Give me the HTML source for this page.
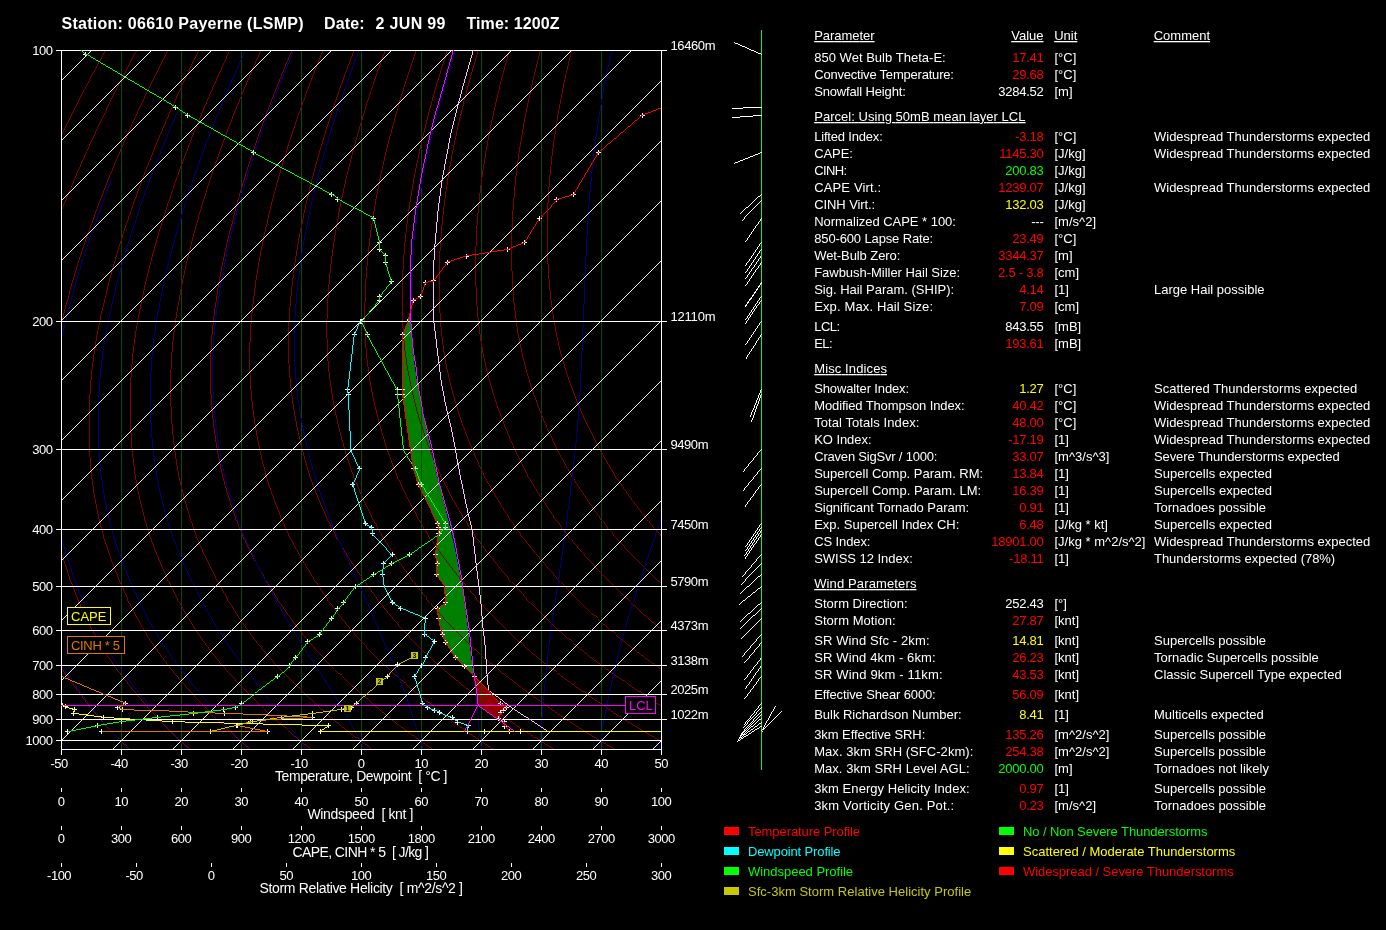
<!DOCTYPE html>
<html><head><meta charset="utf-8"><title>Sounding</title>
<style>html,body{margin:0;padding:0;background:#000;}body{width:1386px;height:930px;position:relative;overflow:hidden;font-family:"Liberation Sans",Arial,sans-serif;}text{white-space:pre}</style>
</head><body>
<svg width="1386" height="930" viewBox="0 0 1386 930" style="position:absolute;left:0;top:0;will-change:transform" font-family="Liberation Sans, Arial, sans-serif" font-size="13" fill="#fff">
<defs><clipPath id="cp"><rect x="61" y="50" width="601" height="700"/></clipPath></defs>
<g shape-rendering="crispEdges" stroke-width="0.99" clip-path="url(#cp)">
<polygon points="410.6,311.0 407.9,321.6 402.9,334.5 402.2,389.7 402.6,394.7 410.4,449.5 413.7,468.5 418.3,484.4 437.5,523.8 438.2,527.3 438.2,533.5 435.3,554.2 437.1,563.3 436.5,574.4 444.4,586.0 445.7,602.6 437.5,608.1 438.2,618.2 442.3,634.8 445.4,642.0 455.3,657.9 464.4,666.1 474.5,676.2 474.4,676.2 473.1,665.7 470.2,639.4 469.3,630.4 464.9,601.6 460.6,572.7 452.4,529.4 448.3,515.4 439.7,484.4 432.5,449.5 423.0,414.0 420.9,400.0 418.7,389.7 415.9,366.6 412.5,345.0 410.8,321.6 410.7,311.0" fill="#008000" stroke="none"/>
<polygon points="474.5,676.2 500.5,703.6 506.3,707.3 503.5,710.4 500.5,713.0 499.0,718.1 504.1,721.5 504.5,723.8 504.0,723.8 478.1,705.4 477.0,694.7 475.2,682.7 474.4,676.2" fill="#900000" stroke="none"/>
<line x1="121.5" y1="50.0" x2="121.5" y2="750.0" stroke="#005000" />
<line x1="181.5" y1="50.0" x2="181.5" y2="750.0" stroke="#005000" />
<line x1="241.5" y1="50.0" x2="241.5" y2="750.0" stroke="#005000" />
<line x1="301.5" y1="50.0" x2="301.5" y2="750.0" stroke="#005000" />
<line x1="361.5" y1="50.0" x2="361.5" y2="750.0" stroke="#005000" />
<line x1="421.5" y1="50.0" x2="421.5" y2="750.0" stroke="#005000" />
<line x1="481.5" y1="50.0" x2="481.5" y2="750.0" stroke="#005000" />
<line x1="541.5" y1="50.0" x2="541.5" y2="750.0" stroke="#005000" />
<line x1="601.5" y1="50.0" x2="601.5" y2="750.0" stroke="#005000" />
<polyline points="69.6,750.7 66.4,747.3 63.2,744.0 60.1,740.6 57.1,737.2 54.1,733.8 51.1,730.3 48.2,726.9 45.4,723.4 42.6,719.9 39.9,716.4 37.2,712.8 34.6,709.2 32.0,705.6 29.5,702.0 27.0,698.4 24.5,694.8 22.0,691.2 19.6,687.6 17.2,684.0 14.9,680.3 12.5,676.7 10.3,673.1 8.1,669.4 5.9,665.7 3.8,661.9 1.8,658.2 -0.2,654.4 -2.1,650.6 -4.0,646.7 -5.8,642.9 -7.6,639.0 -9.3,635.1 -11.0,631.1 -12.6,627.1 -14.1,623.1 -15.6,619.1 -17.0,615.0 -18.4,610.9 -19.7,606.8 -21.0,602.6 -22.2,598.5 -23.4,594.3 -24.6,590.1 -25.7,585.9 -26.8,581.7 -27.8,577.5 -28.9,573.3 -29.9,569.1 -30.8,564.8 -31.7,560.6 -32.6,556.3 -33.4,552.0 -34.2,547.7 -34.9,543.3 -35.5,538.9 -36.1,534.5 -36.7,530.0 -37.1,525.5 -37.6,521.0 -38.0,516.5 -38.3,511.9 -38.6,507.3 -38.8,502.7 -39.0,498.1 -39.2,493.4 -39.3,488.8 -39.3,484.0 -39.3,479.3 -39.2,474.5 -39.1,469.7 -38.9,464.8 -38.7,460.0 -38.4,455.0 -38.0,450.1 -37.6,445.1 -37.2,440.1 -36.7,435.1 -36.1,430.0 -35.6,425.0 -34.9,419.9 -34.3,414.7 -33.5,409.6 -32.8,404.4 -32.0,399.2 -31.1,394.0 -30.2,388.7 -29.2,383.4 -28.1,378.1 -27.0,372.7 -25.8,367.3 -24.6,361.8 -23.3,356.3 -22.0,350.7 -20.5,345.1 -19.0,339.4 -17.4,333.7 -15.8,328.0 -14.1,322.1 -12.3,316.3 -10.4,310.4 -8.5,304.4 -6.6,298.5 -4.6,292.5 -2.5,286.4 -0.4,280.3 1.8,274.2 4.0,268.0 6.3,261.9 8.7,255.6 11.1,249.4 13.5,243.1 16.1,236.7 18.6,230.3 21.3,223.9 23.9,217.5 26.7,211.0 29.5,204.4 32.3,197.9 35.2,191.3 38.2,184.6 41.2,177.9 44.3,171.2 47.4,164.4 50.6,157.6 53.8,150.8 57.1,143.9 60.5,137.0 63.9,130.0 67.4,123.0 70.9,116.0 74.5,108.9 78.2,101.8 81.9,94.6 85.6,87.4 89.5,80.2 93.3,72.9 97.3,65.6 101.3,58.2 105.3,50.8" stroke="#800000" fill="none" />
<polyline points="130.5,750.7 127.0,747.3 123.5,744.0 120.1,740.6 116.8,737.2 113.5,733.8 110.2,730.3 107.1,726.9 103.9,723.4 100.9,719.9 97.8,716.4 94.9,712.8 92.0,709.2 89.1,705.6 86.3,702.0 83.6,698.4 80.8,694.8 78.1,691.2 75.4,687.6 72.7,684.0 70.1,680.3 67.5,676.7 65.0,673.1 62.5,669.4 60.1,665.7 57.8,661.9 55.5,658.2 53.2,654.4 51.0,650.6 48.9,646.7 46.8,642.9 44.8,639.0 42.8,635.1 40.9,631.1 39.0,627.1 37.3,623.1 35.5,619.1 33.9,615.0 32.2,610.9 30.7,606.8 29.2,602.6 27.7,598.5 26.2,594.3 24.8,590.1 23.5,585.9 22.2,581.7 20.9,577.5 19.6,573.3 18.4,569.1 17.2,564.8 16.1,560.6 15.0,556.3 13.9,552.0 12.9,547.7 12.0,543.3 11.1,538.9 10.3,534.5 9.5,530.0 8.8,525.5 8.2,521.0 7.6,516.5 7.0,511.9 6.5,507.3 6.0,502.7 5.6,498.1 5.3,493.4 5.0,488.8 4.7,484.0 4.5,479.3 4.4,474.5 4.3,469.7 4.3,464.8 4.3,460.0 4.4,455.0 4.5,450.1 4.7,445.1 5.0,440.1 5.3,435.1 5.6,430.0 6.0,425.0 6.4,419.9 6.9,414.7 7.4,409.6 8.0,404.4 8.6,399.2 9.3,394.0 10.0,388.7 10.8,383.4 11.6,378.1 12.6,372.7 13.5,367.3 14.6,361.8 15.7,356.3 16.9,350.7 18.1,345.1 19.4,339.4 20.8,333.7 22.3,328.0 23.8,322.1 25.4,316.3 27.1,310.4 28.8,304.4 30.6,298.5 32.4,292.5 34.3,286.4 36.3,280.3 38.3,274.2 40.3,268.0 42.4,261.9 44.6,255.6 46.8,249.4 49.1,243.1 51.5,236.7 53.9,230.3 56.3,223.9 58.8,217.5 61.4,211.0 64.0,204.4 66.7,197.9 69.5,191.3 72.2,184.6 75.1,177.9 78.0,171.2 81.0,164.4 84.0,157.6 87.1,150.8 90.2,143.9 93.4,137.0 96.7,130.0 100.0,123.0 103.4,116.0 106.8,108.9 110.3,101.8 113.9,94.6 117.5,87.4 121.1,80.2 124.9,72.9 128.6,65.6 132.5,58.2 136.4,50.8" stroke="#800000" fill="none" />
<polyline points="191.3,750.7 187.5,747.3 183.8,744.0 180.1,740.6 176.4,737.2 172.9,733.8 169.3,730.3 165.9,726.9 162.5,723.4 159.1,719.9 155.8,716.4 152.6,712.8 149.4,709.2 146.3,705.6 143.2,702.0 140.1,698.4 137.1,694.8 134.1,691.2 131.2,687.6 128.2,684.0 125.3,680.3 122.5,676.7 119.7,673.1 116.9,669.4 114.3,665.7 111.7,661.9 109.1,658.2 106.6,654.4 104.2,650.6 101.8,646.7 99.4,642.9 97.1,639.0 94.9,635.1 92.8,631.1 90.7,627.1 88.6,623.1 86.7,619.1 84.7,615.0 82.9,610.9 81.1,606.8 79.3,602.6 77.6,598.5 75.9,594.3 74.3,590.1 72.7,585.9 71.1,581.7 69.6,577.5 68.1,573.3 66.6,569.1 65.2,564.8 63.8,560.6 62.5,556.3 61.2,552.0 60.0,547.7 58.9,543.3 57.8,538.9 56.7,534.5 55.7,530.0 54.8,525.5 53.9,521.0 53.1,516.5 52.3,511.9 51.6,507.3 50.9,502.7 50.3,498.1 49.7,493.4 49.2,488.8 48.7,484.0 48.3,479.3 48.0,474.5 47.7,469.7 47.4,464.8 47.3,460.0 47.1,455.0 47.1,450.1 47.1,445.1 47.1,440.1 47.2,435.1 47.3,430.0 47.5,425.0 47.7,419.9 48.0,414.7 48.3,409.6 48.7,404.4 49.1,399.2 49.6,394.0 50.1,388.7 50.7,383.4 51.4,378.1 52.1,372.7 52.9,367.3 53.8,361.8 54.7,356.3 55.7,350.7 56.7,345.1 57.9,339.4 59.1,333.7 60.4,328.0 61.7,322.1 63.1,316.3 64.6,310.4 66.2,304.4 67.8,298.5 69.4,292.5 71.1,286.4 72.9,280.3 74.7,274.2 76.6,268.0 78.5,261.9 80.5,255.6 82.6,249.4 84.7,243.1 86.9,236.7 89.1,230.3 91.4,223.9 93.7,217.5 96.1,211.0 98.6,204.4 101.1,197.9 103.7,191.3 106.3,184.6 109.0,177.9 111.8,171.2 114.6,164.4 117.4,157.6 120.4,150.8 123.3,143.9 126.4,137.0 129.5,130.0 132.6,123.0 135.9,116.0 139.1,108.9 142.5,101.8 145.9,94.6 149.3,87.4 152.8,80.2 156.4,72.9 160.0,65.6 163.7,58.2 167.5,50.8" stroke="#800000" fill="none" />
<polyline points="252.1,750.7 248.1,747.3 244.0,744.0 240.0,740.6 236.1,737.2 232.3,733.8 228.5,730.3 224.7,726.9 221.0,723.4 217.4,719.9 213.8,716.4 210.3,712.8 206.8,709.2 203.4,705.6 200.0,702.0 196.7,698.4 193.4,694.8 190.2,691.2 186.9,687.6 183.7,684.0 180.6,680.3 177.4,676.7 174.4,673.1 171.4,669.4 168.5,665.7 165.6,661.9 162.8,658.2 160.0,654.4 157.3,650.6 154.7,646.7 152.1,642.9 149.5,639.0 147.1,635.1 144.6,631.1 142.3,627.1 140.0,623.1 137.8,619.1 135.6,615.0 133.5,610.9 131.5,606.8 129.4,602.6 127.5,598.5 125.6,594.3 123.7,590.1 121.9,585.9 120.1,581.7 118.3,577.5 116.6,573.3 114.9,569.1 113.2,564.8 111.6,560.6 110.1,556.3 108.6,552.0 107.1,547.7 105.7,543.3 104.4,538.9 103.1,534.5 101.9,530.0 100.8,525.5 99.7,521.0 98.6,516.5 97.6,511.9 96.7,507.3 95.8,502.7 94.9,498.1 94.1,493.4 93.4,488.8 92.7,484.0 92.1,479.3 91.5,474.5 91.0,469.7 90.6,464.8 90.2,460.0 89.9,455.0 89.6,450.1 89.4,445.1 89.3,440.1 89.1,435.1 89.1,430.0 89.0,425.0 89.1,419.9 89.1,414.7 89.3,409.6 89.4,404.4 89.7,399.2 90.0,394.0 90.3,388.7 90.7,383.4 91.2,378.1 91.7,372.7 92.3,367.3 93.0,361.8 93.7,356.3 94.5,350.7 95.4,345.1 96.3,339.4 97.3,333.7 98.4,328.0 99.6,322.1 100.8,316.3 102.1,310.4 103.5,304.4 104.9,298.5 106.4,292.5 107.9,286.4 109.5,280.3 111.2,274.2 112.9,268.0 114.6,261.9 116.5,255.6 118.3,249.4 120.3,243.1 122.3,236.7 124.3,230.3 126.5,223.9 128.6,217.5 130.9,211.0 133.2,204.4 135.5,197.9 137.9,191.3 140.4,184.6 142.9,177.9 145.5,171.2 148.1,164.4 150.8,157.6 153.6,150.8 156.4,143.9 159.3,137.0 162.3,130.0 165.3,123.0 168.3,116.0 171.4,108.9 174.6,101.8 177.8,94.6 181.1,87.4 184.5,80.2 187.9,72.9 191.4,65.6 194.9,58.2 198.5,50.8" stroke="#800000" fill="none" />
<polyline points="313.0,750.7 308.6,747.3 304.3,744.0 300.0,740.6 295.8,737.2 291.6,733.8 287.6,730.3 283.5,726.9 279.5,723.4 275.6,719.9 271.8,716.4 268.0,712.8 264.2,709.2 260.5,705.6 256.9,702.0 253.3,698.4 249.8,694.8 246.2,691.2 242.7,687.6 239.2,684.0 235.8,680.3 232.4,676.7 229.1,673.1 225.8,669.4 222.6,665.7 219.5,661.9 216.4,658.2 213.4,654.4 210.4,650.6 207.5,646.7 204.7,642.9 201.9,639.0 199.2,635.1 196.5,631.1 193.9,627.1 191.4,623.1 188.9,619.1 186.5,615.0 184.1,610.9 181.8,606.8 179.6,602.6 177.4,598.5 175.2,594.3 173.1,590.1 171.1,585.9 169.0,581.7 167.0,577.5 165.0,573.3 163.1,569.1 161.2,564.8 159.4,560.6 157.6,556.3 155.9,552.0 154.2,547.7 152.6,543.3 151.0,538.9 149.5,534.5 148.1,530.0 146.7,525.5 145.4,521.0 144.2,516.5 142.9,511.9 141.8,507.3 140.7,502.7 139.6,498.1 138.6,493.4 137.6,488.8 136.7,484.0 135.9,479.3 135.1,474.5 134.4,469.7 133.8,464.8 133.2,460.0 132.6,455.0 132.2,450.1 131.8,445.1 131.4,440.1 131.1,435.1 130.8,430.0 130.6,425.0 130.4,419.9 130.3,414.7 130.2,409.6 130.2,404.4 130.2,399.2 130.3,394.0 130.4,388.7 130.7,383.4 130.9,378.1 131.3,372.7 131.7,367.3 132.2,361.8 132.7,356.3 133.3,350.7 134.0,345.1 134.8,339.4 135.6,333.7 136.5,328.0 137.5,322.1 138.6,316.3 139.7,310.4 140.8,304.4 142.1,298.5 143.4,292.5 144.7,286.4 146.1,280.3 147.6,274.2 149.2,268.0 150.7,261.9 152.4,255.6 154.1,249.4 155.9,243.1 157.7,236.7 159.6,230.3 161.5,223.9 163.5,217.5 165.6,211.0 167.7,204.4 169.9,197.9 172.1,191.3 174.4,184.6 176.8,177.9 179.2,171.2 181.7,164.4 184.3,157.6 186.9,150.8 189.5,143.9 192.2,137.0 195.0,130.0 197.9,123.0 200.8,116.0 203.7,108.9 206.8,101.8 209.8,94.6 213.0,87.4 216.2,80.2 219.5,72.9 222.8,65.6 226.2,58.2 229.6,50.8" stroke="#800000" fill="none" />
<polyline points="373.8,750.7 369.1,747.3 364.5,744.0 360.0,740.6 355.5,737.2 351.0,733.8 346.7,730.3 342.3,726.9 338.1,723.4 333.9,719.9 329.7,716.4 325.7,712.8 321.6,709.2 317.7,705.6 313.8,702.0 309.9,698.4 306.1,694.8 302.3,691.2 298.5,687.6 294.7,684.0 291.0,680.3 287.4,676.7 283.8,673.1 280.3,669.4 276.8,665.7 273.4,661.9 270.1,658.2 266.8,654.4 263.6,650.6 260.4,646.7 257.3,642.9 254.3,639.0 251.3,635.1 248.4,631.1 245.5,627.1 242.8,623.1 240.0,619.1 237.4,615.0 234.8,610.9 232.2,606.8 229.7,602.6 227.3,598.5 224.9,594.3 222.6,590.1 220.2,585.9 218.0,581.7 215.7,577.5 213.5,573.3 211.4,569.1 209.2,564.8 207.2,560.6 205.2,556.3 203.2,552.0 201.3,547.7 199.5,543.3 197.7,538.9 196.0,534.5 194.3,530.0 192.7,525.5 191.2,521.0 189.7,516.5 188.2,511.9 186.9,507.3 185.5,502.7 184.3,498.1 183.0,493.4 181.9,488.8 180.8,484.0 179.7,479.3 178.7,474.5 177.8,469.7 176.9,464.8 176.1,460.0 175.4,455.0 174.7,450.1 174.1,445.1 173.5,440.1 173.0,435.1 172.5,430.0 172.1,425.0 171.7,419.9 171.4,414.7 171.1,409.6 170.9,404.4 170.7,399.2 170.6,394.0 170.6,388.7 170.6,383.4 170.7,378.1 170.8,372.7 171.1,367.3 171.3,361.8 171.7,356.3 172.1,350.7 172.6,345.1 173.2,339.4 173.8,333.7 174.6,328.0 175.4,322.1 176.3,316.3 177.2,310.4 178.2,304.4 179.2,298.5 180.4,292.5 181.5,286.4 182.8,280.3 184.1,274.2 185.4,268.0 186.8,261.9 188.3,255.6 189.9,249.4 191.4,243.1 193.1,236.7 194.8,230.3 196.6,223.9 198.4,217.5 200.3,211.0 202.3,204.4 204.3,197.9 206.4,191.3 208.5,184.6 210.7,177.9 213.0,171.2 215.3,164.4 217.7,157.6 220.1,150.8 222.6,143.9 225.2,137.0 227.8,130.0 230.5,123.0 233.2,116.0 236.0,108.9 238.9,101.8 241.8,94.6 244.8,87.4 247.9,80.2 251.0,72.9 254.2,65.6 257.4,58.2 260.7,50.8" stroke="#800000" fill="none" />
<polyline points="434.7,750.7 429.7,747.3 424.8,744.0 419.9,740.6 415.2,737.2 410.4,733.8 405.8,730.3 401.2,726.9 396.6,723.4 392.1,719.9 387.7,716.4 383.3,712.8 379.1,709.2 374.8,705.6 370.6,702.0 366.5,698.4 362.4,694.8 358.3,691.2 354.3,687.6 350.2,684.0 346.3,680.3 342.4,676.7 338.5,673.1 334.7,669.4 331.0,665.7 327.3,661.9 323.7,658.2 320.2,654.4 316.7,650.6 313.3,646.7 309.9,642.9 306.7,639.0 303.4,635.1 300.3,631.1 297.2,627.1 294.1,623.1 291.2,619.1 288.3,615.0 285.4,610.9 282.6,606.8 279.9,602.6 277.2,598.5 274.6,594.3 272.0,590.1 269.4,585.9 266.9,581.7 264.4,577.5 262.0,573.3 259.6,569.1 257.3,564.8 255.0,560.6 252.7,556.3 250.5,552.0 248.4,547.7 246.3,543.3 244.3,538.9 242.4,534.5 240.5,530.0 238.7,525.5 236.9,521.0 235.2,516.5 233.6,511.9 231.9,507.3 230.4,502.7 228.9,498.1 227.5,493.4 226.1,488.8 224.8,484.0 223.5,479.3 222.3,474.5 221.2,469.7 220.1,464.8 219.1,460.0 218.2,455.0 217.3,450.1 216.5,445.1 215.7,440.1 215.0,435.1 214.3,430.0 213.6,425.0 213.1,419.9 212.5,414.7 212.1,409.6 211.6,404.4 211.3,399.2 211.0,394.0 210.8,388.7 210.6,383.4 210.5,378.1 210.4,372.7 210.4,367.3 210.5,361.8 210.7,356.3 210.9,350.7 211.3,345.1 211.6,339.4 212.1,333.7 212.6,328.0 213.3,322.1 214.0,316.3 214.7,310.4 215.5,304.4 216.4,298.5 217.3,292.5 218.3,286.4 219.4,280.3 220.5,274.2 221.7,268.0 222.9,261.9 224.2,255.6 225.6,249.4 227.0,243.1 228.5,236.7 230.1,230.3 231.7,223.9 233.3,217.5 235.1,211.0 236.8,204.4 238.7,197.9 240.6,191.3 242.6,184.6 244.6,177.9 246.7,171.2 248.9,164.4 251.1,157.6 253.4,150.8 255.7,143.9 258.1,137.0 260.6,130.0 263.1,123.0 265.7,116.0 268.3,108.9 271.1,101.8 273.8,94.6 276.7,87.4 279.6,80.2 282.5,72.9 285.5,65.6 288.6,58.2 291.8,50.8" stroke="#800000" fill="none" />
<polyline points="495.5,750.7 490.2,747.3 485.0,744.0 479.9,740.6 474.8,737.2 469.8,733.8 464.9,730.3 460.0,726.9 455.1,723.4 450.4,719.9 445.7,716.4 441.0,712.8 436.5,709.2 432.0,705.6 427.5,702.0 423.1,698.4 418.7,694.8 414.3,691.2 410.0,687.6 405.7,684.0 401.5,680.3 397.3,676.7 393.2,673.1 389.2,669.4 385.2,665.7 381.3,661.9 377.4,658.2 373.6,654.4 369.9,650.6 366.2,646.7 362.6,642.9 359.0,639.0 355.5,635.1 352.1,631.1 348.8,627.1 345.5,623.1 342.3,619.1 339.1,615.0 336.0,610.9 333.0,606.8 330.0,602.6 327.1,598.5 324.2,594.3 321.4,590.1 318.6,585.9 315.9,581.7 313.1,577.5 310.5,573.3 307.9,569.1 305.3,564.8 302.7,560.6 300.3,556.3 297.9,552.0 295.5,547.7 293.2,543.3 291.0,538.9 288.8,534.5 286.7,530.0 284.7,525.5 282.7,521.0 280.7,516.5 278.9,511.9 277.0,507.3 275.3,502.7 273.6,498.1 271.9,493.4 270.3,488.8 268.8,484.0 267.3,479.3 265.9,474.5 264.6,469.7 263.3,464.8 262.1,460.0 260.9,455.0 259.8,450.1 258.8,445.1 257.8,440.1 256.9,435.1 256.0,430.0 255.2,425.0 254.4,419.9 253.7,414.7 253.0,409.6 252.4,404.4 251.8,399.2 251.3,394.0 250.9,388.7 250.5,383.4 250.2,378.1 250.0,372.7 249.8,367.3 249.7,361.8 249.7,356.3 249.8,350.7 249.9,345.1 250.1,339.4 250.4,333.7 250.7,328.0 251.2,322.1 251.7,316.3 252.2,310.4 252.9,304.4 253.6,298.5 254.3,292.5 255.2,286.4 256.0,280.3 257.0,274.2 258.0,268.0 259.0,261.9 260.2,255.6 261.4,249.4 262.6,243.1 263.9,236.7 265.3,230.3 266.7,223.9 268.2,217.5 269.8,211.0 271.4,204.4 273.1,197.9 274.8,191.3 276.6,184.6 278.5,177.9 280.5,171.2 282.4,164.4 284.5,157.6 286.6,150.8 288.8,143.9 291.0,137.0 293.3,130.0 295.7,123.0 298.1,116.0 300.6,108.9 303.2,101.8 305.8,94.6 308.5,87.4 311.2,80.2 314.0,72.9 316.9,65.6 319.9,58.2 322.8,50.8" stroke="#800000" fill="none" />
<polyline points="556.3,750.7 550.8,747.3 545.3,744.0 539.9,740.6 534.5,737.2 529.2,733.8 524.0,730.3 518.8,726.9 513.7,723.4 508.6,719.9 503.6,716.4 498.7,712.8 493.9,709.2 489.1,705.6 484.4,702.0 479.7,698.4 475.0,694.8 470.4,691.2 465.8,687.6 461.2,684.0 456.7,680.3 452.3,676.7 447.9,673.1 443.6,669.4 439.4,665.7 435.2,661.9 431.1,658.2 427.0,654.4 423.0,650.6 419.1,646.7 415.2,642.9 411.4,639.0 407.7,635.1 404.0,631.1 400.4,627.1 396.9,623.1 393.4,619.1 390.0,615.0 386.7,610.9 383.4,606.8 380.2,602.6 377.0,598.5 373.9,594.3 370.8,590.1 367.8,585.9 364.8,581.7 361.9,577.5 359.0,573.3 356.1,569.1 353.3,564.8 350.5,560.6 347.8,556.3 345.2,552.0 342.6,547.7 340.1,543.3 337.6,538.9 335.2,534.5 332.9,530.0 330.6,525.5 328.4,521.0 326.3,516.5 324.2,511.9 322.1,507.3 320.1,502.7 318.2,498.1 316.3,493.4 314.5,488.8 312.8,484.0 311.1,479.3 309.5,474.5 307.9,469.7 306.4,464.8 305.0,460.0 303.7,455.0 302.4,450.1 301.1,445.1 300.0,440.1 298.8,435.1 297.7,430.0 296.7,425.0 295.7,419.9 294.8,414.7 293.9,409.6 293.1,404.4 292.4,399.2 291.7,394.0 291.1,388.7 290.5,383.4 290.0,378.1 289.6,372.7 289.2,367.3 288.9,361.8 288.7,356.3 288.6,350.7 288.5,345.1 288.5,339.4 288.6,333.7 288.8,328.0 289.0,322.1 289.4,316.3 289.8,310.4 290.2,304.4 290.7,298.5 291.3,292.5 292.0,286.4 292.7,280.3 293.4,274.2 294.3,268.0 295.1,261.9 296.1,255.6 297.1,249.4 298.2,243.1 299.3,236.7 300.5,230.3 301.8,223.9 303.1,217.5 304.5,211.0 306.0,204.4 307.5,197.9 309.1,191.3 310.7,184.6 312.4,177.9 314.2,171.2 316.0,164.4 317.9,157.6 319.9,150.8 321.9,143.9 324.0,137.0 326.1,130.0 328.3,123.0 330.6,116.0 332.9,108.9 335.3,101.8 337.8,94.6 340.3,87.4 342.9,80.2 345.6,72.9 348.3,65.6 351.1,58.2 353.9,50.8" stroke="#800000" fill="none" />
<polyline points="617.2,750.7 611.3,747.3 605.6,744.0 599.8,740.6 594.2,737.2 588.6,733.8 583.1,730.3 577.6,726.9 572.2,723.4 566.9,719.9 561.6,716.4 556.4,712.8 551.3,709.2 546.2,705.6 541.2,702.0 536.3,698.4 531.3,694.8 526.4,691.2 521.6,687.6 516.8,684.0 512.0,680.3 507.3,676.7 502.6,673.1 498.0,669.4 493.5,665.7 489.1,661.9 484.7,658.2 480.4,654.4 476.2,650.6 472.0,646.7 467.8,642.9 463.8,639.0 459.8,635.1 455.9,631.1 452.0,627.1 448.2,623.1 444.5,619.1 440.9,615.0 437.3,610.9 433.8,606.8 430.3,602.6 426.9,598.5 423.6,594.3 420.3,590.1 417.0,585.9 413.8,581.7 410.6,577.5 407.4,573.3 404.3,569.1 401.3,564.8 398.3,560.6 395.4,556.3 392.5,552.0 389.7,547.7 386.9,543.3 384.2,538.9 381.6,534.5 379.1,530.0 376.6,525.5 374.2,521.0 371.8,516.5 369.5,511.9 367.2,507.3 365.0,502.7 362.9,498.1 360.8,493.4 358.8,488.8 356.8,484.0 354.9,479.3 353.1,474.5 351.3,469.7 349.6,464.8 348.0,460.0 346.4,455.0 344.9,450.1 343.5,445.1 342.1,440.1 340.8,435.1 339.5,430.0 338.2,425.0 337.1,419.9 335.9,414.7 334.9,409.6 333.9,404.4 332.9,399.2 332.0,394.0 331.2,388.7 330.4,383.4 329.8,378.1 329.1,372.7 328.6,367.3 328.1,361.8 327.7,356.3 327.4,350.7 327.1,345.1 327.0,339.4 326.9,333.7 326.9,328.0 326.9,322.1 327.1,316.3 327.3,310.4 327.6,304.4 327.9,298.5 328.3,292.5 328.8,286.4 329.3,280.3 329.9,274.2 330.5,268.0 331.2,261.9 332.0,255.6 332.9,249.4 333.8,243.1 334.7,236.7 335.8,230.3 336.9,223.9 338.0,217.5 339.3,211.0 340.5,204.4 341.9,197.9 343.3,191.3 344.8,184.6 346.3,177.9 347.9,171.2 349.6,164.4 351.3,157.6 353.1,150.8 355.0,143.9 356.9,137.0 358.9,130.0 361.0,123.0 363.1,116.0 365.2,108.9 367.5,101.8 369.8,94.6 372.2,87.4 374.6,80.2 377.1,72.9 379.7,65.6 382.3,58.2 385.0,50.8" stroke="#800000" fill="none" />
<polyline points="678.0,750.7 671.9,747.3 665.8,744.0 659.8,740.6 653.9,737.2 648.0,733.8 642.2,730.3 636.4,726.9 630.7,723.4 625.1,719.9 619.6,716.4 614.1,712.8 608.7,709.2 603.4,705.6 598.1,702.0 592.8,698.4 587.6,694.8 582.5,691.2 577.3,687.6 572.3,684.0 567.2,680.3 562.2,676.7 557.3,673.1 552.5,669.4 547.7,665.7 543.0,661.9 538.4,658.2 533.8,654.4 529.3,650.6 524.8,646.7 520.5,642.9 516.2,639.0 511.9,635.1 507.7,631.1 503.6,627.1 499.6,623.1 495.7,619.1 491.8,615.0 487.9,610.9 484.2,606.8 480.5,602.6 476.8,598.5 473.2,594.3 469.7,590.1 466.2,585.9 462.7,581.7 459.3,577.5 455.9,573.3 452.6,569.1 449.3,564.8 446.1,560.6 442.9,556.3 439.8,552.0 436.8,547.7 433.8,543.3 430.9,538.9 428.0,534.5 425.3,530.0 422.6,525.5 419.9,521.0 417.3,516.5 414.8,511.9 412.3,507.3 409.9,502.7 407.5,498.1 405.2,493.4 403.0,488.8 400.8,484.0 398.7,479.3 396.7,474.5 394.7,469.7 392.8,464.8 390.9,460.0 389.2,455.0 387.5,450.1 385.8,445.1 384.2,440.1 382.7,435.1 381.2,430.0 379.8,425.0 378.4,419.9 377.1,414.7 375.8,409.6 374.6,404.4 373.4,399.2 372.4,394.0 371.4,388.7 370.4,383.4 369.5,378.1 368.7,372.7 368.0,367.3 367.3,361.8 366.7,356.3 366.2,350.7 365.8,345.1 365.4,339.4 365.1,333.7 364.9,328.0 364.8,322.1 364.8,316.3 364.8,310.4 364.9,304.4 365.1,298.5 365.3,292.5 365.6,286.4 365.9,280.3 366.3,274.2 366.8,268.0 367.3,261.9 368.0,255.6 368.6,249.4 369.4,243.1 370.2,236.7 371.0,230.3 371.9,223.9 372.9,217.5 374.0,211.0 375.1,204.4 376.3,197.9 377.5,191.3 378.8,184.6 380.2,177.9 381.7,171.2 383.2,164.4 384.7,157.6 386.4,150.8 388.1,143.9 389.8,137.0 391.7,130.0 393.6,123.0 395.5,116.0 397.6,108.9 399.6,101.8 401.8,94.6 404.0,87.4 406.3,80.2 408.6,72.9 411.1,65.6 413.5,58.2 416.1,50.8" stroke="#800000" fill="none" />
<polyline points="738.9,750.7 732.4,747.3 726.1,744.0 719.8,740.6 713.5,737.2 707.4,733.8 701.3,730.3 695.2,726.9 689.3,723.4 683.4,719.9 677.6,716.4 671.8,712.8 666.1,709.2 660.5,705.6 654.9,702.0 649.4,698.4 644.0,694.8 638.5,691.2 633.1,687.6 627.8,684.0 622.5,680.3 617.2,676.7 612.0,673.1 606.9,669.4 601.9,665.7 596.9,661.9 592.0,658.2 587.2,654.4 582.4,650.6 577.7,646.7 573.1,642.9 568.5,639.0 564.0,635.1 559.6,631.1 555.3,627.1 551.0,623.1 546.8,619.1 542.7,615.0 538.6,610.9 534.6,606.8 530.6,602.6 526.7,598.5 522.9,594.3 519.1,590.1 515.4,585.9 511.7,581.7 508.0,577.5 504.4,573.3 500.8,569.1 497.3,564.8 493.9,560.6 490.5,556.3 487.1,552.0 483.9,547.7 480.7,543.3 477.5,538.9 474.4,534.5 471.5,530.0 468.5,525.5 465.7,521.0 462.8,516.5 460.1,511.9 457.4,507.3 454.8,502.7 452.2,498.1 449.7,493.4 447.2,488.8 444.8,484.0 442.5,479.3 440.3,474.5 438.1,469.7 436.0,464.8 433.9,460.0 431.9,455.0 430.0,450.1 428.2,445.1 426.4,440.1 424.6,435.1 422.9,430.0 421.3,425.0 419.7,419.9 418.2,414.7 416.7,409.6 415.3,404.4 414.0,399.2 412.7,394.0 411.5,388.7 410.4,383.4 409.3,378.1 408.3,372.7 407.4,367.3 406.5,361.8 405.7,356.3 405.0,350.7 404.4,345.1 403.8,339.4 403.4,333.7 403.0,328.0 402.7,322.1 402.5,316.3 402.3,310.4 402.3,304.4 402.2,298.5 402.3,292.5 402.4,286.4 402.5,280.3 402.8,274.2 403.1,268.0 403.4,261.9 403.9,255.6 404.4,249.4 404.9,243.1 405.6,236.7 406.3,230.3 407.0,223.9 407.8,217.5 408.7,211.0 409.7,204.4 410.7,197.9 411.8,191.3 412.9,184.6 414.1,177.9 415.4,171.2 416.8,164.4 418.2,157.6 419.6,150.8 421.2,143.9 422.8,137.0 424.4,130.0 426.2,123.0 428.0,116.0 429.9,108.9 431.8,101.8 433.8,94.6 435.8,87.4 438.0,80.2 440.2,72.9 442.4,65.6 444.8,58.2 447.2,50.8" stroke="#800000" fill="none" />
<polyline points="799.7,750.7 793.0,747.3 786.3,744.0 779.7,740.6 773.2,737.2 766.8,733.8 760.4,730.3 754.1,726.9 747.8,723.4 741.6,719.9 735.5,716.4 729.5,712.8 723.5,709.2 717.6,705.6 711.8,702.0 706.0,698.4 700.3,694.8 694.6,691.2 688.9,687.6 683.3,684.0 677.7,680.3 672.2,676.7 666.7,673.1 661.4,669.4 656.1,665.7 650.8,661.9 645.7,658.2 640.6,654.4 635.6,650.6 630.6,646.7 625.7,642.9 620.9,639.0 616.2,635.1 611.5,631.1 606.9,627.1 602.4,623.1 597.9,619.1 593.5,615.0 589.2,610.9 585.0,606.8 580.8,602.6 576.6,598.5 572.6,594.3 568.5,590.1 564.5,585.9 560.6,581.7 556.7,577.5 552.9,573.3 549.1,569.1 545.3,564.8 541.7,560.6 538.0,556.3 534.5,552.0 531.0,547.7 527.5,543.3 524.2,538.9 520.9,534.5 517.6,530.0 514.5,525.5 511.4,521.0 508.4,516.5 505.4,511.9 502.5,507.3 499.6,502.7 496.8,498.1 494.1,493.4 491.4,488.8 488.8,484.0 486.3,479.3 483.8,474.5 481.5,469.7 479.1,464.8 476.9,460.0 474.7,455.0 472.6,450.1 470.5,445.1 468.5,440.1 466.6,435.1 464.7,430.0 462.8,425.0 461.1,419.9 459.3,414.7 457.7,409.6 456.1,404.4 454.5,399.2 453.1,394.0 451.7,388.7 450.3,383.4 449.1,378.1 447.9,372.7 446.7,367.3 445.7,361.8 444.7,356.3 443.8,350.7 443.0,345.1 442.3,339.4 441.6,333.7 441.1,328.0 440.6,322.1 440.2,316.3 439.9,310.4 439.6,304.4 439.4,298.5 439.3,292.5 439.2,286.4 439.2,280.3 439.2,274.2 439.4,268.0 439.6,261.9 439.8,255.6 440.1,249.4 440.5,243.1 441.0,236.7 441.5,230.3 442.1,223.9 442.7,217.5 443.5,211.0 444.2,204.4 445.1,197.9 446.0,191.3 447.0,184.6 448.0,177.9 449.1,171.2 450.3,164.4 451.6,157.6 452.9,150.8 454.3,143.9 455.7,137.0 457.2,130.0 458.8,123.0 460.4,116.0 462.2,108.9 463.9,101.8 465.8,94.6 467.7,87.4 469.7,80.2 471.7,72.9 473.8,65.6 476.0,58.2 478.2,50.8" stroke="#800000" fill="none" />
<polyline points="860.6,750.7 853.5,747.3 846.6,744.0 839.7,740.6 832.9,737.2 826.2,733.8 819.5,730.3 812.9,726.9 806.4,723.4 799.9,719.9 793.5,716.4 787.2,712.8 781.0,709.2 774.8,705.6 768.7,702.0 762.6,698.4 756.6,694.8 750.6,691.2 744.7,687.6 738.8,684.0 732.9,680.3 727.1,676.7 721.4,673.1 715.8,669.4 710.2,665.7 704.8,661.9 699.3,658.2 694.0,654.4 688.7,650.6 683.5,646.7 678.4,642.9 673.3,639.0 668.3,635.1 663.4,631.1 658.5,627.1 653.7,623.1 649.0,619.1 644.4,615.0 639.9,610.9 635.4,606.8 630.9,602.6 626.5,598.5 622.2,594.3 618.0,590.1 613.7,585.9 609.6,581.7 605.4,577.5 601.4,573.3 597.3,569.1 593.4,564.8 589.4,560.6 585.6,556.3 581.8,552.0 578.1,547.7 574.4,543.3 570.8,538.9 567.3,534.5 563.8,530.0 560.5,525.5 557.2,521.0 553.9,516.5 550.7,511.9 547.6,507.3 544.5,502.7 541.5,498.1 538.5,493.4 535.7,488.8 532.9,484.0 530.1,479.3 527.4,474.5 524.8,469.7 522.3,464.8 519.8,460.0 517.4,455.0 515.1,450.1 512.9,445.1 510.7,440.1 508.5,435.1 506.4,430.0 504.4,425.0 502.4,419.9 500.5,414.7 498.6,409.6 496.8,404.4 495.1,399.2 493.4,394.0 491.8,388.7 490.3,383.4 488.8,378.1 487.4,372.7 486.1,367.3 484.9,361.8 483.7,356.3 482.6,350.7 481.6,345.1 480.7,339.4 479.9,333.7 479.1,328.0 478.5,322.1 477.9,316.3 477.4,310.4 476.9,304.4 476.6,298.5 476.2,292.5 476.0,286.4 475.8,280.3 475.7,274.2 475.6,268.0 475.7,261.9 475.7,255.6 475.9,249.4 476.1,243.1 476.4,236.7 476.7,230.3 477.1,223.9 477.6,217.5 478.2,211.0 478.8,204.4 479.5,197.9 480.2,191.3 481.1,184.6 481.9,177.9 482.9,171.2 483.9,164.4 485.0,157.6 486.1,150.8 487.4,143.9 488.6,137.0 490.0,130.0 491.4,123.0 492.9,116.0 494.5,108.9 496.1,101.8 497.8,94.6 499.5,87.4 501.3,80.2 503.2,72.9 505.2,65.6 507.2,58.2 509.3,50.8" stroke="#800000" fill="none" />
<polyline points="921.4,750.7 914.1,747.3 906.8,744.0 899.7,740.6 892.6,737.2 885.5,733.8 878.6,730.3 871.7,726.9 864.9,723.4 858.1,719.9 851.5,716.4 844.9,712.8 838.4,709.2 831.9,705.6 825.5,702.0 819.2,698.4 812.9,694.8 806.6,691.2 800.4,687.6 794.3,684.0 788.2,680.3 782.1,676.7 776.1,673.1 770.2,669.4 764.4,665.7 758.7,661.9 753.0,658.2 747.4,654.4 741.9,650.6 736.4,646.7 731.0,642.9 725.7,639.0 720.4,635.1 715.2,631.1 710.1,627.1 705.1,623.1 700.2,619.1 695.3,615.0 690.5,610.9 685.7,606.8 681.1,602.6 676.4,598.5 671.9,594.3 667.4,590.1 662.9,585.9 658.5,581.7 654.1,577.5 649.8,573.3 645.6,569.1 641.4,564.8 637.2,560.6 633.1,556.3 629.1,552.0 625.1,547.7 621.3,543.3 617.4,538.9 613.7,534.5 610.0,530.0 606.4,525.5 602.9,521.0 599.4,516.5 596.0,511.9 592.7,507.3 589.4,502.7 586.1,498.1 583.0,493.4 579.9,488.8 576.9,484.0 573.9,479.3 571.0,474.5 568.2,469.7 565.5,464.8 562.8,460.0 560.2,455.0 557.7,450.1 555.2,445.1 552.8,440.1 550.4,435.1 548.1,430.0 545.9,425.0 543.7,419.9 541.6,414.7 539.5,409.6 537.5,404.4 535.6,399.2 533.8,394.0 532.0,388.7 530.2,383.4 528.6,378.1 527.0,372.7 525.5,367.3 524.1,361.8 522.7,356.3 521.5,350.7 520.3,345.1 519.2,339.4 518.2,333.7 517.2,328.0 516.4,322.1 515.6,316.3 514.9,310.4 514.3,304.4 513.7,298.5 513.2,292.5 512.8,286.4 512.4,280.3 512.1,274.2 511.9,268.0 511.8,261.9 511.7,255.6 511.6,249.4 511.7,243.1 511.8,236.7 512.0,230.3 512.2,223.9 512.5,217.5 512.9,211.0 513.4,204.4 513.9,197.9 514.5,191.3 515.1,184.6 515.8,177.9 516.6,171.2 517.5,164.4 518.4,157.6 519.4,150.8 520.5,143.9 521.6,137.0 522.8,130.0 524.0,123.0 525.4,116.0 526.8,108.9 528.2,101.8 529.8,94.6 531.4,87.4 533.0,80.2 534.8,72.9 536.6,65.6 538.5,58.2 540.4,50.8" stroke="#800000" fill="none" />
<polyline points="982.2,750.7 974.6,747.3 967.1,744.0 959.6,740.6 952.3,737.2 944.9,733.8 937.7,730.3 930.5,726.9 923.4,723.4 916.4,719.9 909.4,716.4 902.6,712.8 895.8,709.2 889.1,705.6 882.4,702.0 875.8,698.4 869.2,694.8 862.7,691.2 856.2,687.6 849.8,684.0 843.4,680.3 837.1,676.7 830.8,673.1 824.7,669.4 818.6,665.7 812.6,661.9 806.7,658.2 800.8,654.4 795.0,650.6 789.3,646.7 783.6,642.9 778.0,639.0 772.5,635.1 767.1,631.1 761.8,627.1 756.5,623.1 751.3,619.1 746.2,615.0 741.1,610.9 736.1,606.8 731.2,602.6 726.4,598.5 721.6,594.3 716.8,590.1 712.1,585.9 707.5,581.7 702.9,577.5 698.3,573.3 693.8,569.1 689.4,564.8 685.0,560.6 680.7,556.3 676.4,552.0 672.2,547.7 668.1,543.3 664.1,538.9 660.1,534.5 656.2,530.0 652.4,525.5 648.6,521.0 645.0,516.5 641.3,511.9 637.7,507.3 634.2,502.7 630.8,498.1 627.4,493.4 624.1,488.8 620.9,484.0 617.7,479.3 614.6,474.5 611.6,469.7 608.6,464.8 605.8,460.0 602.9,455.0 600.2,450.1 597.5,445.1 594.9,440.1 592.4,435.1 589.9,430.0 587.4,425.0 585.0,419.9 582.7,414.7 580.5,409.6 578.3,404.4 576.2,399.2 574.1,394.0 572.1,388.7 570.2,383.4 568.3,378.1 566.6,372.7 564.9,367.3 563.3,361.8 561.7,356.3 560.3,350.7 558.9,345.1 557.6,339.4 556.4,333.7 555.3,328.0 554.3,322.1 553.3,316.3 552.4,310.4 551.6,304.4 550.9,298.5 550.2,292.5 549.6,286.4 549.1,280.3 548.6,274.2 548.2,268.0 547.9,261.9 547.6,255.6 547.4,249.4 547.3,243.1 547.2,236.7 547.2,230.3 547.3,223.9 547.4,217.5 547.6,211.0 547.9,204.4 548.3,197.9 548.7,191.3 549.2,184.6 549.7,177.9 550.4,171.2 551.1,164.4 551.8,157.6 552.6,150.8 553.5,143.9 554.5,137.0 555.5,130.0 556.7,123.0 557.8,116.0 559.1,108.9 560.4,101.8 561.8,94.6 563.2,87.4 564.7,80.2 566.3,72.9 568.0,65.6 569.7,58.2 571.5,50.8" stroke="#800000" fill="none" />
<polyline points="69.4,750.7 66.3,747.3 63.2,744.0 60.2,740.6 57.2,737.2 54.2,733.8 51.3,730.3 48.5,726.9 45.7,723.4 42.9,719.9 40.2,716.4 37.6,712.8 35.0,709.2 32.5,705.6 30.0,702.0 27.5,698.4 25.0,694.8 22.6,691.2 20.2,687.6 17.8,684.0 15.5,680.3 13.2,676.7 10.9,673.1 8.7,669.4 6.6,665.7 4.5,661.9 2.5,658.2 0.5,654.4 -1.4,650.6 -3.3,646.7 -5.1,642.9 -6.9,639.0 -8.6,635.1 -10.3,631.1 -11.9,627.1 -13.4,623.1 -14.9,619.1 -16.3,615.0 -17.7,610.9 -19.0,606.8 -20.3,602.6 -21.5,598.5 -22.7,594.3 -23.8,590.1 -25.0,585.9 -26.0,581.7 -27.1,577.5 -28.1,573.3 -29.1,569.1 -30.1,564.8 -31.0,560.6 -31.8,556.3 -32.6,552.0 -33.4,547.7 -34.1,543.3 -34.8,538.9 -35.4,534.5 -35.9,530.0 -36.4,525.5 -36.8,521.0 -37.2,516.5 -37.5,511.9 -37.8,507.3 -38.1,502.7 -38.3,498.1 -38.4,493.4 -38.5,488.8 -38.5,484.0 -38.5,479.3 -38.4,474.5 -38.3,469.7 -38.1,464.8 -37.9,460.0 -37.6,455.0 -37.2,450.1 -36.8,445.1 -36.4,440.1 -35.9,435.1 -35.3,430.0 -34.8,425.0 -34.1,419.9 -33.5,414.7 -32.8,409.6 -32.0,404.4 -31.2,399.2 -30.3,394.0 -29.4,388.7 -28.4,383.4 -27.3,378.1 -26.2,372.7 -25.1,367.3 -23.8,361.8 -22.5,356.3 -21.2,350.7 -19.7,345.1 -18.2,339.4 -16.6,333.7 -15.0,328.0 -13.3,322.1 -11.5,316.3 -9.6,310.4 -7.7,304.4 -5.8,298.5 -3.8,292.5" stroke="#000080" fill="none" />
<polyline points="129.9,750.7 126.6,747.3 123.3,744.0 120.1,740.6 117.0,737.2 113.8,733.8 110.7,730.3 107.7,726.9 104.7,723.4 101.7,719.9 98.8,716.4 95.9,712.8 93.1,709.2 90.3,705.6 87.6,702.0 84.9,698.4 82.2,694.8 79.5,691.2 76.9,687.6 74.2,684.0 71.6,680.3 69.1,676.7 66.6,673.1 64.1,669.4 61.8,665.7 59.4,661.9 57.1,658.2 54.9,654.4 52.7,650.6 50.6,646.7 48.5,642.9 46.5,639.0 44.6,635.1 42.7,631.1 40.8,627.1 39.0,623.1 37.3,619.1 35.6,615.0 34.0,610.9 32.5,606.8 30.9,602.6 29.5,598.5 28.0,594.3 26.6,590.1 25.3,585.9 23.9,581.7 22.6,577.5 21.4,573.3 20.2,569.1 19.0,564.8 17.8,560.6 16.7,556.3 15.7,552.0 14.7,547.7 13.8,543.3 12.9,538.9 12.0,534.5 11.3,530.0 10.6,525.5 9.9,521.0 9.3,516.5 8.8,511.9 8.2,507.3 7.8,502.7 7.4,498.1 7.0,493.4 6.7,488.8 6.4,484.0 6.2,479.3 6.1,474.5 6.0,469.7 6.0,464.8 6.0,460.0 6.1,455.0 6.2,450.1 6.4,445.1 6.7,440.1 7.0,435.1 7.3,430.0 7.7,425.0 8.1,419.9 8.5,414.7 9.1,409.6 9.6,404.4 10.2,399.2 10.9,394.0 11.7,388.7 12.4,383.4 13.3,378.1 14.2,372.7 15.2,367.3 16.2,361.8 17.3,356.3 18.5,350.7 19.7,345.1 21.1,339.4 22.4,333.7 23.9,328.0 25.4,322.1 27.0,316.3 28.7,310.4 30.4,304.4 32.2,298.5 34.0,292.5 35.9,286.4 37.9,280.3 39.9,274.2 41.9,268.0 44.0,261.9 46.2,255.6 48.4,249.4 50.7,243.1 53.0,236.7" stroke="#000080" fill="none" />
<polyline points="189.9,750.7 186.6,747.3 183.4,744.0 180.1,740.6 176.9,737.2 173.7,733.8 170.5,730.3 167.4,726.9 164.3,723.4 161.2,719.9 158.1,716.4 155.1,712.8 152.2,709.2 149.2,705.6 146.3,702.0 143.4,698.4 140.5,694.8 137.7,691.2 134.8,687.6 132.0,684.0 129.2,680.3 126.4,676.7 123.7,673.1 121.0,669.4 118.4,665.7 115.9,661.9 113.3,658.2 110.9,654.4 108.5,650.6 106.1,646.7 103.8,642.9 101.5,639.0 99.3,635.1 97.2,631.1 95.1,627.1 93.0,623.1 91.1,619.1 89.2,615.0 87.3,610.9 85.5,606.8 83.7,602.6 82.0,598.5 80.3,594.3 78.7,590.1 77.1,585.9 75.5,581.7 74.0,577.5 72.5,573.3 71.0,569.1 69.6,564.8 68.2,560.6 66.8,556.3 65.6,552.0 64.3,547.7 63.1,543.3 62.0,538.9 61.0,534.5 60.0,530.0 59.0,525.5 58.2,521.0 57.3,516.5 56.5,511.9 55.8,507.3 55.1,502.7 54.4,498.1 53.8,493.4 53.3,488.8 52.8,484.0 52.4,479.3 52.0,474.5 51.7,469.7 51.5,464.8 51.3,460.0 51.2,455.0 51.1,450.1 51.1,445.1 51.1,440.1 51.2,435.1 51.3,430.0 51.4,425.0 51.7,419.9 51.9,414.7 52.2,409.6 52.6,404.4 53.0,399.2 53.5,394.0 54.0,388.7 54.6,383.4 55.2,378.1 55.9,372.7 56.7,367.3 57.5,361.8 58.4,356.3 59.4,350.7 60.5,345.1 61.6,339.4 62.8,333.7 64.0,328.0 65.4,322.1 66.8,316.3 68.3,310.4 69.8,304.4 71.4,298.5 73.0,292.5 74.7,286.4 76.5,280.3 78.3,274.2 80.2,268.0 82.1,261.9 84.1,255.6 86.1,249.4 88.2,243.1 90.4,236.7 92.6,230.3 94.9,223.9 97.2,217.5 99.6,211.0 102.0,204.4 104.5,197.9 107.1,191.3 109.7,184.6 112.4,177.9" stroke="#000080" fill="none" />
<polyline points="249.3,750.7 246.2,747.3 243.2,744.0 240.1,740.6 237.1,737.2 234.1,733.8 231.0,730.3 228.0,726.9 224.9,723.4 221.9,719.9 218.9,716.4 215.9,712.8 213.0,709.2 210.0,705.6 207.1,702.0 204.1,698.4 201.2,694.8 198.2,691.2 195.3,687.6 192.4,684.0 189.4,680.3 186.5,676.7 183.7,673.1 180.8,669.4 178.1,665.7 175.3,661.9 172.6,658.2 170.0,654.4 167.4,650.6 164.8,646.7 162.3,642.9 159.8,639.0 157.4,635.1 155.0,631.1 152.7,627.1 150.4,623.1 148.2,619.1 146.1,615.0 144.0,610.9 141.9,606.8 139.9,602.6 138.0,598.5 136.0,594.3 134.2,590.1 132.3,585.9 130.5,581.7 128.7,577.5 126.9,573.3 125.2,569.1 123.5,564.8 121.9,560.6 120.3,556.3 118.8,552.0 117.3,547.7 115.9,543.3 114.5,538.9 113.2,534.5 112.0,530.0 110.8,525.5 109.6,521.0 108.6,516.5 107.5,511.9 106.5,507.3 105.6,502.7 104.7,498.1 103.9,493.4 103.1,488.8 102.4,484.0 101.7,479.3 101.1,474.5 100.6,469.7 100.1,464.8 99.7,460.0 99.3,455.0 99.0,450.1 98.8,445.1 98.6,440.1 98.4,435.1 98.3,430.0 98.2,425.0 98.2,419.9 98.2,414.7 98.3,409.6 98.5,404.4 98.7,399.2 98.9,394.0 99.2,388.7 99.6,383.4 100.0,378.1 100.5,372.7 101.1,367.3 101.7,361.8 102.4,356.3 103.1,350.7 104.0,345.1 104.9,339.4 105.9,333.7 106.9,328.0 108.1,322.1 109.3,316.3 110.5,310.4 111.9,304.4 113.2,298.5 114.7,292.5 116.2,286.4 117.7,280.3 119.4,274.2 121.0,268.0 122.8,261.9 124.5,255.6 126.4,249.4 128.3,243.1 130.3,236.7 132.3,230.3 134.4,223.9 136.5,217.5 138.7,211.0 141.0,204.4 143.3,197.9 145.7,191.3 148.1,184.6 150.6,177.9 153.1,171.2 155.7,164.4 158.4,157.6 161.1,150.8 163.9,143.9 166.8,137.0 169.7,130.0 172.7,123.0 175.7,116.0 178.8,108.9" stroke="#000080" fill="none" />
<polyline points="307.8,750.7 305.3,747.3 302.8,744.0 300.2,740.6 297.6,737.2 295.0,733.8 292.4,730.3 289.7,726.9 287.1,723.4 284.4,719.9 281.7,716.4 279.1,712.8 276.4,709.2 273.7,705.6 271.0,702.0 268.3,698.4 265.5,694.8 262.7,691.2 259.9,687.6 257.1,684.0 254.3,680.3 251.4,676.7 248.6,673.1 245.8,669.4 243.0,665.7 240.3,661.9 237.6,658.2 234.9,654.4 232.2,650.6 229.5,646.7 226.9,642.9 224.3,639.0 221.8,635.1 219.2,631.1 216.8,627.1 214.3,623.1 212.0,619.1 209.6,615.0 207.3,610.9 205.1,606.8 202.8,602.6 200.7,598.5 198.5,594.3 196.4,590.1 194.3,585.9 192.2,581.7 190.2,577.5 188.2,573.3 186.2,569.1 184.3,564.8 182.4,560.6 180.6,556.3 178.8,552.0 177.0,547.7 175.3,543.3 173.7,538.9 172.1,534.5 170.6,530.0 169.2,525.5 167.8,521.0 166.4,516.5 165.1,511.9 163.9,507.3 162.7,502.7 161.5,498.1 160.4,493.4 159.4,488.8 158.4,484.0 157.5,479.3 156.6,474.5 155.8,469.7 155.0,464.8 154.4,460.0 153.7,455.0 153.2,450.1 152.7,445.1 152.2,440.1 151.8,435.1 151.4,430.0 151.1,425.0 150.8,419.9 150.6,414.7 150.4,409.6 150.3,404.4 150.3,399.2 150.3,394.0 150.3,388.7 150.5,383.4 150.6,378.1 150.9,372.7 151.2,367.3 151.6,361.8 152.1,356.3 152.6,350.7 153.2,345.1 153.8,339.4 154.6,333.7 155.4,328.0 156.3,322.1 157.3,316.3 158.3,310.4 159.4,304.4 160.6,298.5 161.8,292.5 163.1,286.4 164.4,280.3 165.8,274.2 167.2,268.0 168.7,261.9 170.3,255.6 171.9,249.4 173.6,243.1 175.4,236.7 177.2,230.3 179.0,223.9 181.0,217.5 182.9,211.0 185.0,204.4 187.1,197.9 189.3,191.3 191.5,184.6 193.8,177.9 196.1,171.2 198.5,164.4 201.0,157.6 203.5,150.8 206.1,143.9 208.7,137.0 211.4,130.0 214.2,123.0 217.0,116.0 219.9,108.9 222.9,101.8 225.9,94.6 229.0,87.4 232.1,80.2 235.3,72.9 238.5,65.6 241.9,58.2 245.2,50.8" stroke="#000080" fill="none" />
<polyline points="365.8,750.7 364.0,747.3 362.1,744.0 360.3,740.6 358.4,737.2 356.5,733.8 354.6,730.3 352.6,726.9 350.7,723.4 348.7,719.9 346.7,716.4 344.7,712.8 342.6,709.2 340.6,705.6 338.5,702.0 336.3,698.4 334.1,694.8 331.9,691.2 329.6,687.6 327.3,684.0 325.0,680.3 322.6,676.7 320.2,673.1 317.8,669.4 315.4,665.7 313.0,661.9 310.6,658.2 308.2,654.4 305.7,650.6 303.3,646.7 300.9,642.9 298.5,639.0 296.1,635.1 293.7,631.1 291.3,627.1 288.9,623.1 286.6,619.1 284.3,615.0 281.9,610.9 279.7,606.8 277.4,602.6 275.1,598.5 272.9,594.3 270.7,590.1 268.4,585.9 266.2,581.7 264.0,577.5 261.8,573.3 259.7,569.1 257.6,564.8 255.5,560.6 253.4,556.3 251.4,552.0 249.4,547.7 247.4,543.3 245.5,538.9 243.7,534.5 241.9,530.0 240.2,525.5 238.5,521.0 236.9,516.5 235.3,511.9 233.7,507.3 232.2,502.7 230.8,498.1 229.4,493.4 228.1,488.8 226.8,484.0 225.5,479.3 224.4,474.5 223.2,469.7 222.2,464.8 221.2,460.0 220.3,455.0 219.4,450.1 218.6,445.1 217.8,440.1 217.1,435.1 216.4,430.0 215.8,425.0 215.2,419.9 214.7,414.7 214.2,409.6 213.8,404.4 213.4,399.2 213.2,394.0 212.9,388.7 212.7,383.4 212.6,378.1 212.6,372.7 212.6,367.3 212.7,361.8 212.8,356.3 213.1,350.7 213.4,345.1 213.8,339.4 214.2,333.7 214.8,328.0 215.4,322.1 216.1,316.3 216.8,310.4 217.6,304.4 218.5,298.5 219.4,292.5 220.4,286.4 221.5,280.3 222.6,274.2 223.8,268.0 225.0,261.9 226.3,255.6 227.7,249.4 229.1,243.1 230.6,236.7 232.1,230.3 233.7,223.9 235.4,217.5 237.1,211.0 238.9,204.4 240.7,197.9 242.6,191.3 244.6,184.6 246.6,177.9 248.7,171.2 250.9,164.4 253.1,157.6 255.4,150.8 257.7,143.9 260.1,137.0 262.5,130.0 265.1,123.0 267.7,116.0 270.3,108.9 273.0,101.8 275.8,94.6 278.6,87.4 281.5,80.2 284.5,72.9 287.5,65.6 290.5,58.2 293.7,50.8" stroke="#000080" fill="none" />
<polyline points="423.6,750.7 422.5,747.3 421.4,744.0 420.4,740.6 419.3,737.2 418.2,733.8 417.1,730.3 416.0,726.9 414.9,723.4 413.8,719.9 412.6,716.4 411.5,712.8 410.3,709.2 409.2,705.6 408.0,702.0 406.7,698.4 405.5,694.8 404.1,691.2 402.8,687.6 401.4,684.0 399.9,680.3 398.4,676.7 397.0,673.1 395.4,669.4 393.9,665.7 392.4,661.9 390.8,658.2 389.3,654.4 387.7,650.6 386.0,646.7 384.4,642.9 382.7,639.0 381.1,635.1 379.4,631.1 377.7,627.1 376.0,623.1 374.2,619.1 372.5,615.0 370.8,610.9 369.0,606.8 367.2,602.6 365.4,598.5 363.5,594.3 361.7,590.1 359.8,585.9 357.9,581.7 356.0,577.5 354.0,573.3 352.1,569.1 350.1,564.8 348.1,560.6 346.1,556.3 344.2,552.0 342.2,547.7 340.2,543.3 338.3,538.9 336.4,534.5 334.6,530.0 332.7,525.5 330.9,521.0 329.1,516.5 327.3,511.9 325.6,507.3 323.9,502.7 322.2,498.1 320.6,493.4 318.9,488.8 317.4,484.0 315.9,479.3 314.4,474.5 313.0,469.7 311.6,464.8 310.3,460.0 309.0,455.0 307.8,450.1 306.6,445.1 305.5,440.1 304.4,435.1 303.4,430.0 302.4,425.0 301.4,419.9 300.5,414.7 299.7,409.6 298.9,404.4 298.2,399.2 297.5,394.0 296.9,388.7 296.3,383.4 295.8,378.1 295.4,372.7 295.0,367.3 294.7,361.8 294.5,356.3 294.3,350.7 294.3,345.1 294.3,339.4 294.4,333.7 294.5,328.0 294.8,322.1 295.1,316.3 295.4,310.4 295.9,304.4 296.4,298.5 296.9,292.5 297.6,286.4 298.2,280.3 299.0,274.2 299.8,268.0 300.7,261.9 301.6,255.6 302.6,249.4 303.7,243.1 304.8,236.7 306.0,230.3 307.2,223.9 308.5,217.5 309.9,211.0 311.3,204.4 312.8,197.9 314.4,191.3 316.0,184.6 317.7,177.9 319.4,171.2 321.2,164.4 323.1,157.6 325.1,150.8 327.1,143.9 329.1,137.0 331.2,130.0 333.4,123.0 335.7,116.0 338.0,108.9 340.4,101.8 342.8,94.6 345.3,87.4 347.9,80.2 350.5,72.9 353.2,65.6 356.0,58.2 358.8,50.8" stroke="#000080" fill="none" />
<polyline points="481.6,750.7 481.2,747.3 480.8,744.0 480.5,740.6 480.1,737.2 479.7,733.8 479.4,730.3 479.1,726.9 478.7,723.4 478.4,719.9 478.1,716.4 477.8,712.8 477.5,709.2 477.2,705.6 476.8,702.0 476.5,698.4 476.2,694.8 475.8,691.2 475.4,687.6 475.0,684.0 474.5,680.3 474.1,676.7 473.6,673.1 473.2,669.4 472.7,665.7 472.3,661.9 471.8,658.2 471.4,654.4 470.9,650.6 470.5,646.7 470.0,642.9 469.5,639.0 469.0,635.1 468.6,631.1 468.1,627.1 467.6,623.1 467.1,619.1 466.6,615.0 466.1,610.9 465.6,606.8 465.0,602.6 464.4,598.5 463.8,594.3 463.2,590.1 462.5,585.9 461.8,581.7 461.1,577.5 460.3,573.3 459.5,569.1 458.6,564.8 457.8,560.6 456.9,556.3 455.9,552.0 455.0,547.7 454.0,543.3 453.0,538.9 452.0,534.5 451.0,530.0 450.0,525.5 448.9,521.0 447.9,516.5 446.8,511.9 445.6,507.3 444.5,502.7 443.4,498.1 442.2,493.4 441.0,488.8 439.8,484.0 438.6,479.3 437.4,474.5 436.3,469.7 435.1,464.8 433.9,460.0 432.7,455.0 431.6,450.1 430.4,445.1 429.3,440.1 428.1,435.1 427.0,430.0 425.9,425.0 424.8,419.9 423.7,414.7 422.6,409.6 421.6,404.4 420.6,399.2 419.6,394.0 418.6,388.7 417.7,383.4 416.9,378.1 416.1,372.7 415.3,367.3 414.6,361.8 414.0,356.3 413.4,350.7 412.9,345.1 412.4,339.4 412.0,333.7 411.7,328.0 411.5,322.1 411.3,316.3 411.2,310.4 411.1,304.4 411.1,298.5 411.2,292.5 411.3,286.4 411.5,280.3 411.7,274.2 412.0,268.0 412.4,261.9 412.8,255.6 413.3,249.4 413.8,243.1 414.4,236.7 415.1,230.3 415.8,223.9 416.6,217.5 417.5,211.0 418.4,204.4 419.4,197.9 420.5,191.3 421.6,184.6 422.8,177.9 424.0,171.2 425.3,164.4 426.7,157.6 428.1,150.8 429.7,143.9 431.2,137.0 432.9,130.0 434.6,123.0 436.3,116.0 438.2,108.9 440.1,101.8 442.0,94.6 444.1,87.4 446.2,80.2 448.3,72.9 450.5,65.6 452.8,58.2 455.2,50.8" stroke="#000080" fill="none" />
<polyline points="540.1,750.7 540.2,747.3 540.4,744.0 540.5,740.6 540.7,737.2 540.9,733.8 541.1,730.3 541.3,726.9 541.6,723.4 541.8,719.9 542.1,716.4 542.4,712.8 542.7,709.2 543.1,705.6 543.4,702.0 543.8,698.4 544.1,694.8 544.4,691.2 544.7,687.6 545.0,684.0 545.4,680.3 545.7,676.7 546.0,673.1 546.4,669.4 546.7,665.7 547.1,661.9 547.6,658.2 548.0,654.4 548.4,650.6 548.9,646.7 549.4,642.9 549.9,639.0 550.4,635.1 550.9,631.1 551.5,627.1 552.0,623.1 552.6,619.1 553.2,615.0 553.9,610.9 554.5,606.8 555.1,602.6 555.8,598.5 556.4,594.3 557.0,590.1 557.7,585.9 558.3,581.7 558.9,577.5 559.5,573.3 560.0,569.1 560.6,564.8 561.2,560.6 561.8,556.3 562.4,552.0 562.9,547.7 563.5,543.3 564.1,538.9 564.7,534.5 565.3,530.0 566.0,525.5 566.6,521.0 567.2,516.5 567.8,511.9 568.4,507.3 569.0,502.7 569.6,498.1 570.2,493.4 570.7,488.8 571.3,484.0 571.9,479.3 572.5,474.5 573.0,469.7 573.6,464.8 574.1,460.0 574.7,455.0 575.3,450.1 575.8,445.1 576.3,440.1 576.8,435.1 577.3,430.0 577.7,425.0 578.1,419.9 578.5,414.7 578.9,409.6 579.2,404.4 579.6,399.2 579.9,394.0 580.2,388.7 580.5,383.4 580.8,378.1 581.0,372.7 581.3,367.3 581.6,361.8 581.8,356.3 582.0,350.7 582.3,345.1 582.5,339.4 582.8,333.7 583.0,328.0 583.3,322.1 583.5,316.3 583.8,310.4 584.0,304.4 584.3,298.5 584.5,292.5 584.8,286.4 585.0,280.3 585.2,274.2 585.5,268.0 585.8,261.9 586.0,255.6 586.3,249.4 586.6,243.1 587.0,236.7 587.3,230.3 587.7,223.9 588.1,217.5 588.6,211.0 589.0,204.4 589.5,197.9 590.1,191.3 590.7,184.6 591.3,177.9 592.0,171.2 592.7,164.4 593.4,157.6 594.3,150.8 595.1,143.9 596.0,137.0 597.0,130.0 598.1,123.0 599.1,116.0 600.3,108.9 601.5,101.8 602.8,94.6 604.1,87.4 605.5,80.2 606.9,72.9 608.4,65.6 610.0,58.2 611.6,50.8" stroke="#000080" fill="none" />
<polyline points="599.2,750.7 599.6,747.3 600.1,744.0 600.6,740.6 601.1,737.2 601.6,733.8 602.2,730.3 602.8,726.9 603.4,723.4 604.0,719.9 604.7,716.4 605.4,712.8 606.1,709.2 606.8,705.6 607.6,702.0 608.3,698.4 609.1,694.8 609.8,691.2 610.6,687.6 611.3,684.0 612.1,680.3 612.9,676.7 613.7,673.1 614.5,669.4 615.4,665.7 616.3,661.9 617.2,658.2 618.2,654.4 619.1,650.6 620.1,646.7 621.2,642.9 622.2,639.0 623.3,635.1 624.4,631.1 625.6,627.1 626.7,623.1 628.0,619.1 629.2,615.0 630.5,610.9 631.7,606.8 633.1,602.6 634.4,598.5 635.7,594.3 637.1,590.1 638.4,585.9 639.8,581.7 641.1,577.5 642.5,573.3 643.9,569.1 645.3,564.8 646.7,560.6 648.1,556.3 649.6,552.0 651.0,547.7 652.5,543.3 654.0,538.9 655.6,534.5 657.2,530.0 658.8,525.5 660.4,521.0 662.1,516.5 663.8,511.9 665.5,507.3 667.2,502.7 668.9,498.1 670.7,493.4 672.4,488.8 674.2,484.0 676.1,479.3 677.9,474.5 679.8,469.7 681.7,464.8 683.7,460.0 685.6,455.0 687.6,450.1 689.6,445.1 691.7,440.1 693.7,435.1 695.8,430.0 697.8,425.0 699.9,419.9 702.0,414.7 704.1,409.6 706.2,404.4 708.4,399.2 710.6,394.0 712.8,388.7 715.0,383.4 717.2,378.1 719.5,372.7 721.8,367.3 724.1,361.8 726.5,356.3 728.9,350.7 731.3,345.1 733.8,339.4 736.3,333.7 738.8,328.0 741.4,322.1 744.0,316.3 746.6,310.4 749.2,304.4 751.9,298.5 754.6,292.5 757.2,286.4 759.9,280.3 762.7,274.2 765.4,268.0 768.1,261.9 770.9,255.6 773.6,249.4 776.4,243.1 779.2,236.7 782.0,230.3 784.7,223.9 787.5,217.5 790.4,211.0 793.2,204.4 796.0,197.9 798.8,191.3 801.6,184.6 804.5,177.9 807.3,171.2 810.1,164.4 813.0,157.6 815.8,150.8 818.6,143.9 821.5,137.0 824.3,130.0 827.1,123.0 829.9,116.0 832.7,108.9 835.5,101.8 838.3,94.6 841.0,87.4 843.8,80.2 846.6,72.9 849.3,65.6 852.0,58.2 854.8,50.8" stroke="#000080" fill="none" />
<polyline points="658.6,750.7 659.3,747.3 659.9,744.0 660.6,740.6 661.3,737.2 662.0,733.8 662.8,730.3 663.6,726.9 664.4,723.4 665.2,719.9 666.1,716.4 667.0,712.8 667.9,709.2 668.9,705.6 669.8,702.0 670.8,698.4 671.8,694.8 672.8,691.2 673.8,687.6 674.7,684.0 675.7,680.3 676.8,676.7 677.8,673.1 678.9,669.4 680.0,665.7 681.2,661.9 682.4,658.2 683.6,654.4 684.8,650.6 686.1,646.7 687.4,642.9 688.7,639.0 690.1,635.1 691.5,631.1 692.9,627.1 694.4,623.1 695.9,619.1 697.4,615.0 699.0,610.9 700.6,606.8 702.2,602.6 703.9,598.5 705.5,594.3 707.2,590.1 708.9,585.9 710.6,581.7 712.3,577.5 714.0,573.3 715.8,569.1 717.5,564.8 719.3,560.6 721.1,556.3 722.9,552.0 724.8,547.7 726.7,543.3 728.6,538.9 730.5,534.5 732.5,530.0 734.6,525.5 736.6,521.0 738.7,516.5 740.8,511.9 743.0,507.3 745.1,502.7 747.3,498.1 749.6,493.4 751.8,488.8 754.1,484.0 756.4,479.3 758.8,474.5 761.2,469.7 763.6,464.8 766.1,460.0 768.6,455.0 771.1,450.1 773.7,445.1 776.3,440.1 778.9,435.1 781.6,430.0 784.2,425.0 786.9,419.9 789.7,414.7 792.4,409.6 795.2,404.4 798.0,399.2 800.8,394.0 803.7,388.7 806.7,383.4 809.6,378.1 812.6,372.7 815.7,367.3 818.8,361.8 821.9,356.3 825.1,350.7 828.3,345.1 831.6,339.4 834.9,333.7 838.3,328.0 841.8,322.1 845.3,316.3 848.8,310.4 852.4,304.4 856.0,298.5 859.6,292.5 863.3,286.4 867.0,280.3 870.8,274.2 874.6,268.0 878.4,261.9 882.3,255.6 886.2,249.4 890.1,243.1 894.1,236.7 898.1,230.3 902.1,223.9 906.2,217.5 910.3,211.0 914.5,204.4 918.7,197.9 922.9,191.3 927.2,184.6 931.5,177.9 935.8,171.2 940.2,164.4 944.7,157.6 949.1,150.8 953.6,143.9 958.2,137.0 962.7,130.0 967.3,123.0 972.0,116.0 976.7,108.9 981.4,101.8 986.2,94.6 991.0,87.4 995.8,80.2 1000.7,72.9 1005.6,65.6 1010.5,58.2 1015.5,50.8" stroke="#000080" fill="none" />
<g>
<line x1="-728.0" y1="750.0" x2="-27.0" y2="49.0" stroke="#fff" />
<line x1="-668.0" y1="750.0" x2="33.0" y2="49.0" stroke="#fff" />
<line x1="-608.0" y1="750.0" x2="93.0" y2="49.0" stroke="#fff" />
<line x1="-548.0" y1="750.0" x2="153.0" y2="49.0" stroke="#fff" />
<line x1="-488.0" y1="750.0" x2="213.0" y2="49.0" stroke="#fff" />
<line x1="-428.0" y1="750.0" x2="273.0" y2="49.0" stroke="#fff" />
<line x1="-368.0" y1="750.0" x2="333.0" y2="49.0" stroke="#fff" />
<line x1="-308.0" y1="750.0" x2="393.0" y2="49.0" stroke="#fff" />
<line x1="-248.0" y1="750.0" x2="453.0" y2="49.0" stroke="#fff" />
<line x1="-188.0" y1="750.0" x2="513.0" y2="49.0" stroke="#fff" />
<line x1="-128.0" y1="750.0" x2="573.0" y2="49.0" stroke="#fff" />
<line x1="-68.0" y1="750.0" x2="633.0" y2="49.0" stroke="#fff" />
<line x1="-8.0" y1="750.0" x2="693.0" y2="49.0" stroke="#fff" />
<line x1="52.0" y1="750.0" x2="753.0" y2="49.0" stroke="#fff" />
<line x1="112.0" y1="750.0" x2="813.0" y2="49.0" stroke="#fff" />
<line x1="172.0" y1="750.0" x2="873.0" y2="49.0" stroke="#fff" />
<line x1="232.0" y1="750.0" x2="933.0" y2="49.0" stroke="#fff" />
<line x1="292.0" y1="750.0" x2="993.0" y2="49.0" stroke="#fff" />
<line x1="352.0" y1="750.0" x2="1053.0" y2="49.0" stroke="#fff" />
<line x1="412.0" y1="750.0" x2="1113.0" y2="49.0" stroke="#fff" />
<line x1="472.0" y1="750.0" x2="1173.0" y2="49.0" stroke="#fff" />
<line x1="532.0" y1="750.0" x2="1233.0" y2="49.0" stroke="#fff" />
<line x1="592.0" y1="750.0" x2="1293.0" y2="49.0" stroke="#fff" />
<line x1="652.0" y1="750.0" x2="1353.0" y2="49.0" stroke="#fff" />
</g>
</g>
<g shape-rendering="crispEdges" stroke-width="1">
<line x1="56.0" y1="50.5" x2="667.0" y2="50.5" stroke="#fff" />
<line x1="56.0" y1="321.5" x2="667.0" y2="321.5" stroke="#fff" />
<line x1="56.0" y1="449.5" x2="667.0" y2="449.5" stroke="#fff" />
<line x1="56.0" y1="529.5" x2="667.0" y2="529.5" stroke="#fff" />
<line x1="56.0" y1="586.5" x2="667.0" y2="586.5" stroke="#fff" />
<line x1="56.0" y1="630.5" x2="667.0" y2="630.5" stroke="#fff" />
<line x1="56.0" y1="665.5" x2="667.0" y2="665.5" stroke="#fff" />
<line x1="56.0" y1="694.5" x2="667.0" y2="694.5" stroke="#fff" />
<line x1="56.0" y1="719.5" x2="667.0" y2="719.5" stroke="#fff" />
<line x1="56.0" y1="740.5" x2="662.0" y2="740.5" stroke="#fff" />
<line x1="61.5" y1="50.0" x2="61.5" y2="750.0" stroke="#fff" />
<line x1="661.5" y1="50.0" x2="661.5" y2="750.0" stroke="#fff" />
<line x1="61.0" y1="749.5" x2="662.0" y2="749.5" stroke="#fff" />
<line x1="61.5" y1="749.0" x2="61.5" y2="755.0" stroke="#fff" />
<line x1="61.5" y1="788.0" x2="61.5" y2="792.0" stroke="#fff" />
<line x1="61.5" y1="826.0" x2="61.5" y2="830.0" stroke="#fff" />
<line x1="121.5" y1="749.0" x2="121.5" y2="755.0" stroke="#fff" />
<line x1="121.5" y1="788.0" x2="121.5" y2="792.0" stroke="#fff" />
<line x1="121.5" y1="826.0" x2="121.5" y2="830.0" stroke="#fff" />
<line x1="181.5" y1="749.0" x2="181.5" y2="755.0" stroke="#fff" />
<line x1="181.5" y1="788.0" x2="181.5" y2="792.0" stroke="#fff" />
<line x1="181.5" y1="826.0" x2="181.5" y2="830.0" stroke="#fff" />
<line x1="241.5" y1="749.0" x2="241.5" y2="755.0" stroke="#fff" />
<line x1="241.5" y1="788.0" x2="241.5" y2="792.0" stroke="#fff" />
<line x1="241.5" y1="826.0" x2="241.5" y2="830.0" stroke="#fff" />
<line x1="301.5" y1="749.0" x2="301.5" y2="755.0" stroke="#fff" />
<line x1="301.5" y1="788.0" x2="301.5" y2="792.0" stroke="#fff" />
<line x1="301.5" y1="826.0" x2="301.5" y2="830.0" stroke="#fff" />
<line x1="361.5" y1="749.0" x2="361.5" y2="755.0" stroke="#fff" />
<line x1="361.5" y1="788.0" x2="361.5" y2="792.0" stroke="#fff" />
<line x1="361.5" y1="826.0" x2="361.5" y2="830.0" stroke="#fff" />
<line x1="421.5" y1="749.0" x2="421.5" y2="755.0" stroke="#fff" />
<line x1="421.5" y1="788.0" x2="421.5" y2="792.0" stroke="#fff" />
<line x1="421.5" y1="826.0" x2="421.5" y2="830.0" stroke="#fff" />
<line x1="481.5" y1="749.0" x2="481.5" y2="755.0" stroke="#fff" />
<line x1="481.5" y1="788.0" x2="481.5" y2="792.0" stroke="#fff" />
<line x1="481.5" y1="826.0" x2="481.5" y2="830.0" stroke="#fff" />
<line x1="541.5" y1="749.0" x2="541.5" y2="755.0" stroke="#fff" />
<line x1="541.5" y1="788.0" x2="541.5" y2="792.0" stroke="#fff" />
<line x1="541.5" y1="826.0" x2="541.5" y2="830.0" stroke="#fff" />
<line x1="601.5" y1="749.0" x2="601.5" y2="755.0" stroke="#fff" />
<line x1="601.5" y1="788.0" x2="601.5" y2="792.0" stroke="#fff" />
<line x1="601.5" y1="826.0" x2="601.5" y2="830.0" stroke="#fff" />
<line x1="661.5" y1="749.0" x2="661.5" y2="755.0" stroke="#fff" />
<line x1="661.5" y1="788.0" x2="661.5" y2="792.0" stroke="#fff" />
<line x1="661.5" y1="826.0" x2="661.5" y2="830.0" stroke="#fff" />
<line x1="61.5" y1="863.0" x2="61.5" y2="867.0" stroke="#fff" />
<line x1="136.5" y1="863.0" x2="136.5" y2="867.0" stroke="#fff" />
<line x1="211.5" y1="863.0" x2="211.5" y2="867.0" stroke="#fff" />
<line x1="286.5" y1="863.0" x2="286.5" y2="867.0" stroke="#fff" />
<line x1="361.5" y1="863.0" x2="361.5" y2="867.0" stroke="#fff" />
<line x1="436.5" y1="863.0" x2="436.5" y2="867.0" stroke="#fff" />
<line x1="511.5" y1="863.0" x2="511.5" y2="867.0" stroke="#fff" />
<line x1="586.5" y1="863.0" x2="586.5" y2="867.0" stroke="#fff" />
<line x1="661.5" y1="863.0" x2="661.5" y2="867.0" stroke="#fff" />
</g>
<g shape-rendering="crispEdges" stroke-width="0.99" fill="none" clip-path="url(#cp)">
<path d="M640 115.5h5M642.5 113v5" stroke="#fff" stroke-width="1"/>
<path d="M596 152.5h5M598.5 150v5" stroke="#fff" stroke-width="1"/>
<path d="M571 194.5h5M573.5 192v5" stroke="#fff" stroke-width="1"/>
<path d="M554 199.5h5M556.5 197v5" stroke="#fff" stroke-width="1"/>
<path d="M537 218.5h5M539.5 216v5" stroke="#fff" stroke-width="1"/>
<path d="M522 242.5h5M524.5 240v5" stroke="#fff" stroke-width="1"/>
<path d="M505 249.5h5M507.5 247v5" stroke="#fff" stroke-width="1"/>
<path d="M464 256.5h5M466.5 254v5" stroke="#fff" stroke-width="1"/>
<path d="M445 262.5h5M447.5 260v5" stroke="#fff" stroke-width="1"/>
<path d="M431 280.5h5M433.5 278v5" stroke="#fff" stroke-width="1"/>
<path d="M423 282.5h5M425.5 280v5" stroke="#fff" stroke-width="1"/>
<path d="M418 296.5h5M420.5 294v5" stroke="#fff" stroke-width="1"/>
<path d="M411 300.5h5M413.5 298v5" stroke="#fff" stroke-width="1"/>
<path d="M405 321.5h5M407.5 319v5" stroke="#fff" stroke-width="1"/>
<path d="M400 334.5h5M402.5 332v5" stroke="#fff" stroke-width="1"/>
<path d="M400 389.5h5M402.5 387v5" stroke="#fff" stroke-width="1"/>
<path d="M400 394.5h5M402.5 392v5" stroke="#fff" stroke-width="1"/>
<path d="M411 468.5h5M413.5 466v5" stroke="#fff" stroke-width="1"/>
<path d="M416 484.5h5M418.5 482v5" stroke="#fff" stroke-width="1"/>
<path d="M435 523.5h5M437.5 521v5" stroke="#fff" stroke-width="1"/>
<path d="M436 527.5h5M438.5 525v5" stroke="#fff" stroke-width="1"/>
<path d="M436 533.5h5M438.5 531v5" stroke="#fff" stroke-width="1"/>
<path d="M433 554.5h5M435.5 552v5" stroke="#fff" stroke-width="1"/>
<path d="M435 563.5h5M437.5 561v5" stroke="#fff" stroke-width="1"/>
<path d="M434 574.5h5M436.5 572v5" stroke="#fff" stroke-width="1"/>
<path d="M443 602.5h5M445.5 600v5" stroke="#fff" stroke-width="1"/>
<path d="M435 608.5h5M437.5 606v5" stroke="#fff" stroke-width="1"/>
<path d="M436 618.5h5M438.5 616v5" stroke="#fff" stroke-width="1"/>
<path d="M440 634.5h5M442.5 632v5" stroke="#fff" stroke-width="1"/>
<path d="M443 642.5h5M445.5 640v5" stroke="#fff" stroke-width="1"/>
<path d="M453 657.5h5M455.5 655v5" stroke="#fff" stroke-width="1"/>
<path d="M462 666.5h5M464.5 664v5" stroke="#fff" stroke-width="1"/>
<path d="M472 676.5h5M474.5 674v5" stroke="#fff" stroke-width="1"/>
<path d="M498 703.5h5M500.5 701v5" stroke="#fff" stroke-width="1"/>
<path d="M504 707.5h5M506.5 705v5" stroke="#fff" stroke-width="1"/>
<path d="M501 710.5h5M503.5 708v5" stroke="#fff" stroke-width="1"/>
<path d="M498 712.5h5M500.5 710v5" stroke="#fff" stroke-width="1"/>
<path d="M496 718.5h5M498.5 716v5" stroke="#fff" stroke-width="1"/>
<path d="M502 721.5h5M504.5 719v5" stroke="#fff" stroke-width="1"/>
<path d="M502 726.5h5M504.5 724v5" stroke="#fff" stroke-width="1"/>
<path d="M507 731.5h5M509.5 729v5" stroke="#fff" stroke-width="1"/>
<path d="M358 321.5h5M360.5 319v5" stroke="#fff" stroke-width="1"/>
<path d="M352 334.5h5M354.5 332v5" stroke="#fff" stroke-width="1"/>
<path d="M345 389.5h5M347.5 387v5" stroke="#fff" stroke-width="1"/>
<path d="M346 394.5h5M348.5 392v5" stroke="#fff" stroke-width="1"/>
<path d="M357 468.5h5M359.5 466v5" stroke="#fff" stroke-width="1"/>
<path d="M350 484.5h5M352.5 482v5" stroke="#fff" stroke-width="1"/>
<path d="M363 523.5h5M365.5 521v5" stroke="#fff" stroke-width="1"/>
<path d="M369 527.5h5M371.5 525v5" stroke="#fff" stroke-width="1"/>
<path d="M370 533.5h5M372.5 531v5" stroke="#fff" stroke-width="1"/>
<path d="M390 554.5h5M392.5 552v5" stroke="#fff" stroke-width="1"/>
<path d="M381 563.5h5M383.5 561v5" stroke="#fff" stroke-width="1"/>
<path d="M380 574.5h5M382.5 572v5" stroke="#fff" stroke-width="1"/>
<path d="M390 602.5h5M392.5 600v5" stroke="#fff" stroke-width="1"/>
<path d="M398 608.5h5M400.5 606v5" stroke="#fff" stroke-width="1"/>
<path d="M423 618.5h5M425.5 616v5" stroke="#fff" stroke-width="1"/>
<path d="M422 634.5h5M424.5 632v5" stroke="#fff" stroke-width="1"/>
<path d="M432 641.5h5M434.5 639v5" stroke="#fff" stroke-width="1"/>
<path d="M423 657.5h5M425.5 655v5" stroke="#fff" stroke-width="1"/>
<path d="M419 665.5h5M421.5 663v5" stroke="#fff" stroke-width="1"/>
<path d="M412 676.5h5M414.5 674v5" stroke="#fff" stroke-width="1"/>
<path d="M420 703.5h5M422.5 701v5" stroke="#fff" stroke-width="1"/>
<path d="M425 707.5h5M427.5 705v5" stroke="#fff" stroke-width="1"/>
<path d="M432 710.5h5M434.5 708v5" stroke="#fff" stroke-width="1"/>
<path d="M437 712.5h5M439.5 710v5" stroke="#fff" stroke-width="1"/>
<path d="M450 717.5h5M452.5 715v5" stroke="#fff" stroke-width="1"/>
<path d="M455 722.5h5M457.5 720v5" stroke="#fff" stroke-width="1"/>
<path d="M466 725.5h5M468.5 723v5" stroke="#fff" stroke-width="1"/>
<path d="M465 731.5h5M467.5 729v5" stroke="#fff" stroke-width="1"/>
<path d="M83 54.5h5M85.5 52v5" stroke="#fff" stroke-width="1"/>
<path d="M173 107.5h5M175.5 105v5" stroke="#fff" stroke-width="1"/>
<path d="M185 115.5h5M187.5 113v5" stroke="#fff" stroke-width="1"/>
<path d="M251 152.5h5M253.5 150v5" stroke="#fff" stroke-width="1"/>
<path d="M329 194.5h5M331.5 192v5" stroke="#fff" stroke-width="1"/>
<path d="M335 199.5h5M337.5 197v5" stroke="#fff" stroke-width="1"/>
<path d="M371 218.5h5M373.5 216v5" stroke="#fff" stroke-width="1"/>
<path d="M377 242.5h5M379.5 240v5" stroke="#fff" stroke-width="1"/>
<path d="M377 249.5h5M379.5 247v5" stroke="#fff" stroke-width="1"/>
<path d="M383 255.5h5M385.5 253v5" stroke="#fff" stroke-width="1"/>
<path d="M383 262.5h5M385.5 260v5" stroke="#fff" stroke-width="1"/>
<path d="M389 281.5h5M391.5 279v5" stroke="#fff" stroke-width="1"/>
<path d="M377 296.5h5M379.5 294v5" stroke="#fff" stroke-width="1"/>
<path d="M377 300.5h5M379.5 298v5" stroke="#fff" stroke-width="1"/>
<path d="M359 321.5h5M361.5 319v5" stroke="#fff" stroke-width="1"/>
<path d="M365 334.5h5M367.5 332v5" stroke="#fff" stroke-width="1"/>
<path d="M395 389.5h5M397.5 387v5" stroke="#fff" stroke-width="1"/>
<path d="M395 394.5h5M397.5 392v5" stroke="#fff" stroke-width="1"/>
<path d="M413 468.5h5M415.5 466v5" stroke="#fff" stroke-width="1"/>
<path d="M419 484.5h5M421.5 482v5" stroke="#fff" stroke-width="1"/>
<path d="M443 523.5h5M445.5 521v5" stroke="#fff" stroke-width="1"/>
<path d="M443 527.5h5M445.5 525v5" stroke="#fff" stroke-width="1"/>
<path d="M437 533.5h5M439.5 531v5" stroke="#fff" stroke-width="1"/>
<path d="M407 554.5h5M409.5 552v5" stroke="#fff" stroke-width="1"/>
<path d="M389 563.5h5M391.5 561v5" stroke="#fff" stroke-width="1"/>
<path d="M371 574.5h5M373.5 572v5" stroke="#fff" stroke-width="1"/>
<path d="M353 586.5h5M355.5 584v5" stroke="#fff" stroke-width="1"/>
<path d="M341 602.5h5M343.5 600v5" stroke="#fff" stroke-width="1"/>
<path d="M335 608.5h5M337.5 606v5" stroke="#fff" stroke-width="1"/>
<path d="M329 618.5h5M331.5 616v5" stroke="#fff" stroke-width="1"/>
<path d="M317 634.5h5M319.5 632v5" stroke="#fff" stroke-width="1"/>
<path d="M305 641.5h5M307.5 639v5" stroke="#fff" stroke-width="1"/>
<path d="M293 657.5h5M295.5 655v5" stroke="#fff" stroke-width="1"/>
<path d="M287 665.5h5M289.5 663v5" stroke="#fff" stroke-width="1"/>
<path d="M275 676.5h5M277.5 674v5" stroke="#fff" stroke-width="1"/>
<path d="M239 703.5h5M241.5 701v5" stroke="#fff" stroke-width="1"/>
<path d="M233 707.5h5M235.5 705v5" stroke="#fff" stroke-width="1"/>
<path d="M221 709.5h5M223.5 707v5" stroke="#fff" stroke-width="1"/>
<path d="M191 713.5h5M193.5 711v5" stroke="#fff" stroke-width="1"/>
<path d="M155 717.5h5M157.5 715v5" stroke="#fff" stroke-width="1"/>
<path d="M119 721.5h5M121.5 719v5" stroke="#fff" stroke-width="1"/>
<path d="M95 725.5h5M97.5 723v5" stroke="#fff" stroke-width="1"/>
<path d="M65 731.5h5M67.5 729v5" stroke="#fff" stroke-width="1"/>
<path d="M208 731.5h5M210.5 729v5" stroke="#fff" stroke-width="1"/>
<path d="M234 725.5h5M236.5 723v5" stroke="#fff" stroke-width="1"/>
<path d="M250 721.5h5M252.5 719v5" stroke="#fff" stroke-width="1"/>
<path d="M279 717.5h5M281.5 715v5" stroke="#fff" stroke-width="1"/>
<path d="M310 713.5h5M312.5 711v5" stroke="#fff" stroke-width="1"/>
<path d="M339 709.5h5M341.5 707v5" stroke="#fff" stroke-width="1"/>
<path d="M349 707.5h5M351.5 705v5" stroke="#fff" stroke-width="1"/>
<path d="M354 703.5h5M356.5 701v5" stroke="#fff" stroke-width="1"/>
<path d="M385 676.5h5M387.5 674v5" stroke="#fff" stroke-width="1"/>
<path d="M395 664.5h5M397.5 662v5" stroke="#fff" stroke-width="1"/>
<path d="M411 656.5h5M413.5 654v5" stroke="#fff" stroke-width="1"/>
<path d="M63 706.5h5M65.5 704v5" stroke="#fff" stroke-width="1"/>
<path d="M72 709.5h5M74.5 707v5" stroke="#fff" stroke-width="1"/>
<path d="M71 713.5h5M73.5 711v5" stroke="#fff" stroke-width="1"/>
<path d="M101 717.5h5M103.5 715v5" stroke="#fff" stroke-width="1"/>
<path d="M170 721.5h5M172.5 719v5" stroke="#fff" stroke-width="1"/>
<path d="M326 725.5h5M328.5 723v5" stroke="#fff" stroke-width="1"/>
<path d="M318 731.5h5M320.5 729v5" stroke="#fff" stroke-width="1"/>
<path d="M123 703.5h5M125.5 701v5" stroke="#fff" stroke-width="1"/>
<path d="M115 707.5h5M117.5 705v5" stroke="#fff" stroke-width="1"/>
<path d="M120 709.5h5M122.5 707v5" stroke="#fff" stroke-width="1"/>
<path d="M222 713.5h5M224.5 711v5" stroke="#fff" stroke-width="1"/>
<path d="M310 717.5h5M312.5 715v5" stroke="#fff" stroke-width="1"/>
<path d="M248 721.5h5M250.5 719v5" stroke="#fff" stroke-width="1"/>
<path d="M235 725.5h5M237.5 723v5" stroke="#fff" stroke-width="1"/>
<path d="M265 731.5h5M267.5 729v5" stroke="#fff" stroke-width="1"/>
<path d="M99 731.5h5M101.5 729v5" stroke="#fff" stroke-width="1"/>
<path d="M482 731.5h5M484.5 729v5" stroke="#fff" stroke-width="1"/>
<path d="M518 731.5h5M520.5 729v5" stroke="#fff" stroke-width="1"/>
<line x1="61.0" y1="705.5" x2="626.0" y2="705.5" stroke="#ff00ff" />
<line x1="101.9" y1="731.5" x2="267.5" y2="731.5" stroke="#e07800" />
<line x1="320.1" y1="731.5" x2="661.0" y2="731.5" stroke="#ffff00" />
<polyline points="61.8,676.6 125.7,703.3 117.8,707.7 122.8,709.5 135.8,710.1 161.8,710.6 187.8,712.0 225.0,713.4 258.0,714.5 278.3,715.6 312.9,717.3 301.4,718.1 271.0,719.5 250.0,721.7 237.9,725.5 267.5,731.5" stroke="#e07800" fill="none" />
<polyline points="61.8,704.5 65.8,707.0 74.5,709.5 73.5,713.4 103.3,717.3 172.6,721.7 328.8,725.7 320.1,731.5" stroke="#ffff00" fill="none" />
<polyline points="210.1,731.5 236.4,725.4 252.3,721.7 281.2,717.3 312.9,713.4 341.1,709.5 351.9,707.2 356.2,703.3 387.2,676.6 397.6,664.8 413.9,656.4" stroke="#c8c800" fill="none" />
<polyline points="80.7,50.3 85.5,54.2 175.5,107.4 187.5,115.5 253.5,152.6 331.5,194.3 337.5,199.4 373.5,218.3 379.5,242.3 379.5,249.3 385.5,255.7 385.5,262.6 391.5,281.8 379.5,296.6 379.5,300.2 361.5,321.6 367.5,334.5 397.5,389.7 397.5,394.7 403.5,449.5 415.5,468.5 421.5,484.4 445.5,523.8 445.5,527.3 439.5,533.5 409.5,554.2 391.5,563.3 373.5,574.4 355.5,586.1 343.5,602.6 337.5,608.5 331.5,618.4 319.5,634.4 307.5,641.5 295.5,657.4 289.5,665.8 277.5,676.5 241.5,703.4 235.5,707.2 223.5,709.5 193.5,713.4 157.5,717.3 121.5,721.4 97.5,725.4 67.5,731.5" stroke="#00ff00" fill="none" />
<polyline points="473.3,50.3 461.9,90.0 456.5,111.4 451.0,132.9 445.8,160.1 441.9,181.6 438.0,210.8 435.5,238.0 434.1,255.6 433.6,280.0 433.9,321.8 437.5,352.0 441.1,381.0 444.7,400.0 447.6,414.0 449.8,421.6 455.5,449.5 462.0,484.4 468.5,515.4 472.1,529.4 477.2,572.7 480.8,601.6 483.2,630.4 484.6,639.4 486.5,665.7 487.5,682.7 489.0,690.7 499.8,698.6 507.0,704.4 524.3,715.9 548.1,731.5" stroke="#ffc0ff" fill="none" />
<polyline points="453.3,50.3 442.3,90.0 436.0,111.4 429.2,138.7 421.4,175.7 415.6,210.8 412.1,238.0 410.7,259.5 410.5,280.0 410.8,321.6 412.5,345.0 415.9,366.6 418.7,389.7 420.9,400.0 423.0,414.0 432.5,449.5 439.7,484.4 448.3,515.4 452.4,529.4 460.6,572.7 464.9,601.6 469.3,630.4 470.2,639.4 473.1,665.7 475.2,682.7 477.0,694.7 478.1,705.4 514.9,731.5" stroke="#ff00ff" fill="none" />
<polyline points="478.1,705.4 464.4,731.5" stroke="#ff00ff" fill="none" />
<polyline points="360.3,321.6 354.2,334.5 347.6,389.7 348.3,394.7 350.9,449.5 359.6,468.5 352.7,484.4 365.4,523.8 371.1,527.3 372.9,533.5 392.3,554.2 383.4,563.3 382.7,574.4 384.1,586.1 392.3,602.6 401.0,608.1 425.2,618.2 424.5,634.8 434.1,641.6 425.9,657.5 421.5,665.7 414.6,676.2 422.6,703.6 427.6,707.3 434.5,710.4 439.9,713.0 452.2,717.4 457.9,722.0 468.3,725.3 467.3,731.5" stroke="#00ffff" fill="none" />
<polyline points="661.0,107.9 642.2,115.3 598.3,152.7 573.4,194.6 556.4,199.5 539.3,218.6 524.7,242.3 507.5,249.4 466.2,256.0 447.3,262.4 433.6,281.0 425.2,282.5 420.6,296.6 413.3,300.2 407.9,321.6 402.9,334.5 402.2,389.7 402.6,394.7 410.4,449.5 413.7,468.5 418.3,484.4 437.5,523.8 438.2,527.3 438.2,533.5 435.3,554.2 437.1,563.3 436.5,574.4 444.4,586.0 445.7,602.6 437.5,608.1 438.2,618.2 442.3,634.8 445.4,642.0 455.3,657.9 464.4,666.1 474.5,676.2 500.5,703.6 506.3,707.3 503.5,710.4 500.5,713.0 499.0,718.1 504.1,721.5 504.8,726.0 509.9,731.5" stroke="#ff0000" fill="none" />
<rect x="61" y="703" width="2" height="2" fill="#ffff80" stroke="none"/>
<rect x="344" y="705" width="7" height="7" fill="#c8c800" stroke="none"/>
<rect x="376" y="678" width="7" height="7" fill="#c8c800" stroke="none"/>
<rect x="411" y="652" width="7" height="7" fill="#c8c800" stroke="none"/>
</g>
<text x="347.5" y="711" font-size="7" fill="#000" text-anchor="middle" font-weight="bold">1</text>
<text x="379.5" y="684" font-size="7" fill="#000" text-anchor="middle" font-weight="bold">2</text>
<text x="414.5" y="658" font-size="7" fill="#000" text-anchor="middle" font-weight="bold">3</text>
<g shape-rendering="crispEdges" stroke-width="1">
<rect x="67.5" y="607.5" width="43" height="17" fill="#000" stroke="#ffff00"/>
<rect x="67.5" y="636.5" width="57" height="17" fill="#000" stroke="#e07800"/>
<rect x="625.5" y="696.5" width="30" height="17" fill="#000" stroke="#ff00ff"/>
<line x1="761.5" y1="30.0" x2="761.5" y2="770.0" stroke="#00ff00" />
<line x1="761.5" y1="54.4" x2="734.1" y2="42.4" stroke="#fff" stroke-width="0.99"/>
<line x1="761.5" y1="107.5" x2="732.1" y2="108.3" stroke="#fff" stroke-width="0.99"/>
<line x1="761.5" y1="115.3" x2="732.1" y2="117.6" stroke="#fff" stroke-width="0.99"/>
<line x1="761.5" y1="152.5" x2="734.1" y2="163.4" stroke="#fff" stroke-width="0.99"/>
<line x1="761.5" y1="194.2" x2="740.3" y2="213.7" stroke="#fff" stroke-width="0.99"/>
<line x1="761.5" y1="199.5" x2="741.1" y2="220.5" stroke="#fff" stroke-width="0.99"/>
<line x1="761.5" y1="218.4" x2="745.2" y2="242.3" stroke="#fff" stroke-width="0.99"/>
<line x1="761.5" y1="242.3" x2="745.2" y2="266.1" stroke="#fff" stroke-width="0.99"/>
<line x1="761.5" y1="249.2" x2="745.2" y2="273.4" stroke="#fff" stroke-width="0.99"/>
<line x1="761.5" y1="255.6" x2="745.2" y2="279.4" stroke="#fff" stroke-width="0.99"/>
<line x1="761.5" y1="262.4" x2="745.2" y2="286.3" stroke="#fff" stroke-width="0.99"/>
<line x1="761.5" y1="281.5" x2="745.2" y2="305.6" stroke="#fff" stroke-width="0.99"/>
<line x1="761.5" y1="283.0" x2="745.2" y2="307.1" stroke="#fff" stroke-width="0.99"/>
<line x1="761.5" y1="296.3" x2="745.2" y2="320.2" stroke="#fff" stroke-width="0.99"/>
<line x1="761.5" y1="299.8" x2="745.2" y2="324.0" stroke="#fff" stroke-width="0.99"/>
<line x1="761.5" y1="321.1" x2="745.2" y2="345.3" stroke="#fff" stroke-width="0.99"/>
<line x1="761.5" y1="334.4" x2="746.0" y2="358.5" stroke="#fff" stroke-width="0.99"/>
<line x1="761.5" y1="389.2" x2="750.3" y2="416.6" stroke="#fff" stroke-width="0.99"/>
<line x1="761.5" y1="394.0" x2="751.6" y2="421.5" stroke="#fff" stroke-width="0.99"/>
<line x1="761.5" y1="449.2" x2="743.2" y2="471.5" stroke="#fff" stroke-width="0.99"/>
<line x1="761.5" y1="468.2" x2="743.2" y2="490.5" stroke="#fff" stroke-width="0.99"/>
<line x1="761.5" y1="483.9" x2="744.4" y2="507.4" stroke="#fff" stroke-width="0.99"/>
<line x1="761.5" y1="523.0" x2="745.2" y2="547.3" stroke="#fff" stroke-width="0.99"/>
<line x1="761.5" y1="527.0" x2="745.2" y2="551.3" stroke="#fff" stroke-width="0.99"/>
<line x1="761.5" y1="530.3" x2="744.4" y2="556.0" stroke="#fff" stroke-width="0.99"/>
<line x1="761.5" y1="533.5" x2="744.4" y2="558.5" stroke="#fff" stroke-width="0.99"/>
<line x1="761.5" y1="554.2" x2="742.3" y2="576.8" stroke="#fff" stroke-width="0.99"/>
<line x1="761.5" y1="563.3" x2="741.1" y2="584.6" stroke="#fff" stroke-width="0.99"/>
<line x1="761.5" y1="574.2" x2="740.3" y2="593.5" stroke="#fff" stroke-width="0.99"/>
<line x1="761.5" y1="586.6" x2="739.2" y2="604.4" stroke="#fff" stroke-width="0.99"/>
<line x1="761.5" y1="602.3" x2="740.3" y2="621.3" stroke="#fff" stroke-width="0.99"/>
<line x1="761.5" y1="608.4" x2="740.3" y2="628.5" stroke="#fff" stroke-width="0.99"/>
<line x1="761.5" y1="618.4" x2="741.1" y2="639.4" stroke="#fff" stroke-width="0.99"/>
<line x1="761.5" y1="634.2" x2="742.3" y2="656.5" stroke="#fff" stroke-width="0.99"/>
<line x1="761.5" y1="641.5" x2="743.5" y2="663.2" stroke="#fff" stroke-width="0.99"/>
<line x1="761.5" y1="657.6" x2="744.4" y2="680.2" stroke="#fff" stroke-width="0.99"/>
<line x1="761.5" y1="665.6" x2="745.2" y2="689.0" stroke="#fff" stroke-width="0.99"/>
<line x1="761.5" y1="676.1" x2="744.4" y2="699.2" stroke="#fff" stroke-width="0.99"/>
<line x1="761.5" y1="703.4" x2="743.8" y2="725.2" stroke="#fff" stroke-width="0.99"/>
<line x1="761.5" y1="707.4" x2="742.7" y2="728.4" stroke="#fff" stroke-width="0.99"/>
<line x1="761.5" y1="711.2" x2="741.1" y2="733.8" stroke="#fff" stroke-width="0.99"/>
<line x1="761.5" y1="714.4" x2="740.0" y2="735.9" stroke="#fff" stroke-width="0.99"/>
<line x1="761.5" y1="718.2" x2="739.0" y2="738.0" stroke="#fff" stroke-width="0.99"/>
<line x1="761.5" y1="722.5" x2="737.9" y2="739.7" stroke="#fff" stroke-width="0.99"/>
<line x1="761.5" y1="726.2" x2="737.2" y2="741.5" stroke="#fff" stroke-width="0.99"/>
<line x1="761.5" y1="731.4" x2="775.5" y2="706.1" stroke="#fff" stroke-width="0.99"/>
<line x1="761.5" y1="731.4" x2="781.8" y2="711.2" stroke="#fff" stroke-width="0.99"/>
</g>
<text x="71" y="620.5" fill="#ffff00" >CAPE</text>
<text x="71" y="649.5" fill="#e07800" textLength="49">CINH * 5</text>
<text x="629" y="709.5" fill="#ff00ff" >LCL</text>
<text x="52.5" y="54.5" text-anchor="end" letter-spacing="-0.5">100</text>
<text x="52.5" y="325.5" text-anchor="end" letter-spacing="-0.5">200</text>
<text x="52.5" y="453.5" text-anchor="end" letter-spacing="-0.5">300</text>
<text x="52.5" y="533.5" text-anchor="end" letter-spacing="-0.5">400</text>
<text x="52.5" y="590.5" text-anchor="end" letter-spacing="-0.5">500</text>
<text x="52.5" y="634.5" text-anchor="end" letter-spacing="-0.5">600</text>
<text x="52.5" y="669.5" text-anchor="end" letter-spacing="-0.5">700</text>
<text x="52.5" y="698.5" text-anchor="end" letter-spacing="-0.5">800</text>
<text x="52.5" y="723.5" text-anchor="end" letter-spacing="-0.5">900</text>
<text x="52.5" y="744.5" text-anchor="end" letter-spacing="-0.5">1000</text>
<text x="670.5" y="50" textLength="45">16460m</text>
<text x="670.5" y="321" textLength="45">12110m</text>
<text x="670.5" y="449" textLength="38">9490m</text>
<text x="670.5" y="529" textLength="38">7450m</text>
<text x="670.5" y="586" textLength="38">5790m</text>
<text x="670.5" y="630" textLength="38">4373m</text>
<text x="670.5" y="665" textLength="38">3138m</text>
<text x="670.5" y="694" textLength="38">2025m</text>
<text x="670.5" y="719" textLength="38">1022m</text>
<text x="59.1" y="767.5" text-anchor="middle" letter-spacing="-0.5">-50</text>
<text x="61.2" y="805.5" text-anchor="middle" letter-spacing="-0.5">0</text>
<text x="61.2" y="842.5" text-anchor="middle" letter-spacing="-0.5">0</text>
<text x="119.1" y="767.5" text-anchor="middle" letter-spacing="-0.5">-40</text>
<text x="121.2" y="805.5" text-anchor="middle" letter-spacing="-0.5">10</text>
<text x="121.2" y="842.5" text-anchor="middle" letter-spacing="-0.5">300</text>
<text x="179.1" y="767.5" text-anchor="middle" letter-spacing="-0.5">-30</text>
<text x="181.2" y="805.5" text-anchor="middle" letter-spacing="-0.5">20</text>
<text x="181.2" y="842.5" text-anchor="middle" letter-spacing="-0.5">600</text>
<text x="239.1" y="767.5" text-anchor="middle" letter-spacing="-0.5">-20</text>
<text x="241.2" y="805.5" text-anchor="middle" letter-spacing="-0.5">30</text>
<text x="241.2" y="842.5" text-anchor="middle" letter-spacing="-0.5">900</text>
<text x="299.1" y="767.5" text-anchor="middle" letter-spacing="-0.5">-10</text>
<text x="301.2" y="805.5" text-anchor="middle" letter-spacing="-0.5">40</text>
<text x="301.2" y="842.5" text-anchor="middle" letter-spacing="-0.5">1200</text>
<text x="361.2" y="767.5" text-anchor="middle" letter-spacing="-0.5">0</text>
<text x="361.2" y="805.5" text-anchor="middle" letter-spacing="-0.5">50</text>
<text x="361.2" y="842.5" text-anchor="middle" letter-spacing="-0.5">1500</text>
<text x="421.2" y="767.5" text-anchor="middle" letter-spacing="-0.5">10</text>
<text x="421.2" y="805.5" text-anchor="middle" letter-spacing="-0.5">60</text>
<text x="421.2" y="842.5" text-anchor="middle" letter-spacing="-0.5">1800</text>
<text x="481.2" y="767.5" text-anchor="middle" letter-spacing="-0.5">20</text>
<text x="481.2" y="805.5" text-anchor="middle" letter-spacing="-0.5">70</text>
<text x="481.2" y="842.5" text-anchor="middle" letter-spacing="-0.5">2100</text>
<text x="541.2" y="767.5" text-anchor="middle" letter-spacing="-0.5">30</text>
<text x="541.2" y="805.5" text-anchor="middle" letter-spacing="-0.5">80</text>
<text x="541.2" y="842.5" text-anchor="middle" letter-spacing="-0.5">2400</text>
<text x="601.2" y="767.5" text-anchor="middle" letter-spacing="-0.5">40</text>
<text x="601.2" y="805.5" text-anchor="middle" letter-spacing="-0.5">90</text>
<text x="601.2" y="842.5" text-anchor="middle" letter-spacing="-0.5">2700</text>
<text x="661.2" y="767.5" text-anchor="middle" letter-spacing="-0.5">50</text>
<text x="661.2" y="805.5" text-anchor="middle" letter-spacing="-0.5">100</text>
<text x="661.2" y="842.5" text-anchor="middle" letter-spacing="-0.5">3000</text>
<text x="59.1" y="880" text-anchor="middle" letter-spacing="-0.5">-100</text>
<text x="134.1" y="880" text-anchor="middle" letter-spacing="-0.5">-50</text>
<text x="211.2" y="880" text-anchor="middle" letter-spacing="-0.5">0</text>
<text x="286.2" y="880" text-anchor="middle" letter-spacing="-0.5">50</text>
<text x="361.2" y="880" text-anchor="middle" letter-spacing="-0.5">100</text>
<text x="436.2" y="880" text-anchor="middle" letter-spacing="-0.5">150</text>
<text x="511.2" y="880" text-anchor="middle" letter-spacing="-0.5">200</text>
<text x="586.2" y="880" text-anchor="middle" letter-spacing="-0.5">250</text>
<text x="661.2" y="880" text-anchor="middle" letter-spacing="-0.5">300</text>
<text x="275" y="780.5" font-size="14" textLength="172.5">Temperature, Dewpoint  [ °C ]</text>
<text x="307.5" y="818.5" font-size="14" textLength="106">Windspeed  [ knt ]</text>
<text x="292.5" y="856.5" font-size="14" textLength="136.5">CAPE, CINH * 5  [ J/kg ]</text>
<text x="259.5" y="893" font-size="14" textLength="203.5">Storm Relative Helicity  [ m^2/s^2 ]</text>
<g font-size="16" font-weight="bold">
<text x="61.5" y="29" font-size="16" textLength="242">Station: 06610 Payerne (LSMP)</text>
<text x="324" y="29" font-size="16" textLength="40.5">Date:</text>
<text x="375.5" y="29" font-size="16" textLength="70">2 JUN 99</text>
<text x="466.5" y="29" font-size="16" textLength="93">Time: 1200Z</text>
</g>
<text x="814.2" y="40" text-decoration="underline" textLength="60.3">Parameter</text>
<text x="1043.5" y="40" text-anchor="end" text-decoration="underline" >Value</text>
<text x="1054.2" y="40" text-decoration="underline" >Unit</text>
<text x="1153.7" y="40" text-decoration="underline" >Comment</text>
<text x="814.2" y="121" text-decoration="underline" textLength="211.3">Parcel: Using 50mB mean layer LCL</text>
<text x="814.2" y="373" text-decoration="underline" textLength="72.8">Misc Indices</text>
<text x="814.2" y="588" text-decoration="underline" textLength="102.2">Wind Parameters</text>
<text x="814.2" y="61.6" textLength="131.5">850 Wet Bulb Theta-E:</text>
<text x="1043.5" y="61.6" fill="#ff0000" text-anchor="end" letter-spacing="-0.25">17.41</text>
<text x="1054.5" y="61.6" >[°C]</text>
<text x="814.2" y="78.6" textLength="139.7">Convective Temperature:</text>
<text x="1043.5" y="78.6" fill="#ff0000" text-anchor="end" letter-spacing="-0.25">29.68</text>
<text x="1054.5" y="78.6" >[°C]</text>
<text x="814.2" y="95.6" textLength="91.6">Snowfall Height:</text>
<text x="1043.5" y="95.6" text-anchor="end" letter-spacing="-0.25">3284.52</text>
<text x="1054.5" y="95.6" >[m]</text>
<text x="814.2" y="140.6" textLength="68.6">Lifted Index:</text>
<text x="1043.5" y="140.6" fill="#ff0000" text-anchor="end" letter-spacing="-0.25">-3.18</text>
<text x="1054.5" y="140.6" >[°C]</text>
<text x="1154" y="140.6" textLength="216.2">Widespread Thunderstorms expected</text>
<text x="814.2" y="157.6" textLength="38.7">CAPE:</text>
<text x="1043.5" y="157.6" fill="#ff0000" text-anchor="end" letter-spacing="-0.25">1145.30</text>
<text x="1054.5" y="157.6" >[J/kg]</text>
<text x="1154" y="157.6" textLength="216.2">Widespread Thunderstorms expected</text>
<text x="814.2" y="174.6" textLength="32.9">CINH:</text>
<text x="1043.5" y="174.6" fill="#00ff00" text-anchor="end" letter-spacing="-0.25">200.83</text>
<text x="1054.5" y="174.6" >[J/kg]</text>
<text x="814.2" y="191.6" textLength="66.9">CAPE Virt.:</text>
<text x="1043.5" y="191.6" fill="#ff0000" text-anchor="end" letter-spacing="-0.25">1239.07</text>
<text x="1054.5" y="191.6" >[J/kg]</text>
<text x="1154" y="191.6" textLength="216.2">Widespread Thunderstorms expected</text>
<text x="814.2" y="208.6" textLength="61.0">CINH Virt.:</text>
<text x="1043.5" y="208.6" fill="#ffff00" text-anchor="end" letter-spacing="-0.25">132.03</text>
<text x="1054.5" y="208.6" >[J/kg]</text>
<text x="814.2" y="225.6" textLength="141.7">Normalized CAPE * 100:</text>
<text x="1043.5" y="225.6" text-anchor="end" letter-spacing="-0.25">---</text>
<text x="1054.5" y="225.6" >[m/s^2]</text>
<text x="814.2" y="242.6" textLength="119.0">850-600 Lapse Rate:</text>
<text x="1043.5" y="242.6" fill="#ff0000" text-anchor="end" letter-spacing="-0.25">23.49</text>
<text x="1054.5" y="242.6" >[°C]</text>
<text x="814.2" y="259.6" textLength="86.1">Wet-Bulb Zero:</text>
<text x="1043.5" y="259.6" fill="#ff0000" text-anchor="end" letter-spacing="-0.25">3344.37</text>
<text x="1054.5" y="259.6" >[m]</text>
<text x="814.2" y="276.6" textLength="145.9">Fawbush-Miller Hail Size:</text>
<text x="1043.5" y="276.6" fill="#ff0000" text-anchor="end" letter-spacing="-0.25">2.5 - 3.8</text>
<text x="1054.5" y="276.6" >[cm]</text>
<text x="814.2" y="293.6" textLength="139.9">Sig. Hail Param. (SHIP):</text>
<text x="1043.5" y="293.6" fill="#ff0000" text-anchor="end" letter-spacing="-0.25">4.14</text>
<text x="1054.5" y="293.6" >[1]</text>
<text x="1154" y="293.6" >Large Hail possible</text>
<text x="814.2" y="310.6" textLength="118.8">Exp. Max. Hail Size:</text>
<text x="1043.5" y="310.6" fill="#ff0000" text-anchor="end" letter-spacing="-0.25">7.09</text>
<text x="1054.5" y="310.6" >[cm]</text>
<text x="814.2" y="330.6" textLength="26.0">LCL:</text>
<text x="1043.5" y="330.6" text-anchor="end" letter-spacing="-0.25">843.55</text>
<text x="1054.5" y="330.6" >[mB]</text>
<text x="814.2" y="347.6" textLength="18.3">EL:</text>
<text x="1043.5" y="347.6" fill="#ff0000" text-anchor="end" letter-spacing="-0.25">193.61</text>
<text x="1054.5" y="347.6" >[mB]</text>
<text x="814.2" y="392.6" textLength="94.9">Showalter Index:</text>
<text x="1043.5" y="392.6" fill="#ffff00" text-anchor="end" letter-spacing="-0.25">1.27</text>
<text x="1054.5" y="392.6" >[°C]</text>
<text x="1154" y="392.6" textLength="203.2">Scattered Thunderstorms expected</text>
<text x="814.2" y="409.6" textLength="150.3">Modified Thompson Index:</text>
<text x="1043.5" y="409.6" fill="#ff0000" text-anchor="end" letter-spacing="-0.25">40.42</text>
<text x="1054.5" y="409.6" >[°C]</text>
<text x="1154" y="409.6" textLength="216.2">Widespread Thunderstorms expected</text>
<text x="814.2" y="426.6" textLength="105.2">Total Totals Index:</text>
<text x="1043.5" y="426.6" fill="#ff0000" text-anchor="end" letter-spacing="-0.25">48.00</text>
<text x="1054.5" y="426.6" >[°C]</text>
<text x="1154" y="426.6" textLength="216.2">Widespread Thunderstorms expected</text>
<text x="814.2" y="443.6" textLength="57.3">KO Index:</text>
<text x="1043.5" y="443.6" fill="#ff0000" text-anchor="end" letter-spacing="-0.25">-17.19</text>
<text x="1054.5" y="443.6" >[1]</text>
<text x="1154" y="443.6" textLength="216.2">Widespread Thunderstorms expected</text>
<text x="814.2" y="460.6" textLength="123.2">Craven SigSvr / 1000:</text>
<text x="1043.5" y="460.6" fill="#ff0000" text-anchor="end" letter-spacing="-0.25">33.07</text>
<text x="1054.5" y="460.6" >[m^3/s^3]</text>
<text x="1154" y="460.6" textLength="185.7">Severe Thunderstorms expected</text>
<text x="814.2" y="477.6" textLength="169.0">Supercell Comp. Param. RM:</text>
<text x="1043.5" y="477.6" fill="#ff0000" text-anchor="end" letter-spacing="-0.25">13.84</text>
<text x="1054.5" y="477.6" >[1]</text>
<text x="1154" y="477.6" textLength="118.1">Supercells expected</text>
<text x="814.2" y="494.6" textLength="166.9">Supercell Comp. Param. LM:</text>
<text x="1043.5" y="494.6" fill="#ff0000" text-anchor="end" letter-spacing="-0.25">16.39</text>
<text x="1054.5" y="494.6" >[1]</text>
<text x="1154" y="494.6" textLength="118.1">Supercells expected</text>
<text x="814.2" y="511.6" textLength="154.9">Significant Tornado Param:</text>
<text x="1043.5" y="511.6" fill="#ff0000" text-anchor="end" letter-spacing="-0.25">0.91</text>
<text x="1054.5" y="511.6" >[1]</text>
<text x="1154" y="511.6" textLength="112.1">Tornadoes possible</text>
<text x="814.2" y="528.6" textLength="145.1">Exp. Supercell Index CH:</text>
<text x="1043.5" y="528.6" fill="#ff0000" text-anchor="end" letter-spacing="-0.25">6.48</text>
<text x="1054.5" y="528.6" >[J/kg * kt]</text>
<text x="1154" y="528.6" textLength="118.1">Supercells expected</text>
<text x="814.2" y="545.6" textLength="56.2">CS Index:</text>
<text x="1043.5" y="545.6" fill="#ff0000" text-anchor="end" letter-spacing="-0.25">18901.00</text>
<text x="1054.5" y="545.6" >[J/kg * m^2/s^2]</text>
<text x="1154" y="545.6" textLength="216.2">Widespread Thunderstorms expected</text>
<text x="814.2" y="562.6" textLength="98.6">SWISS 12 Index:</text>
<text x="1043.5" y="562.6" fill="#ff0000" text-anchor="end" letter-spacing="-0.25">-18.11</text>
<text x="1054.5" y="562.6" >[1]</text>
<text x="1154" y="562.6" textLength="181.2">Thunderstorms expected (78%)</text>
<text x="814.2" y="607.6" textLength="93.5">Storm Direction:</text>
<text x="1043.5" y="607.6" text-anchor="end" letter-spacing="-0.25">252.43</text>
<text x="1054.5" y="607.6" >[°]</text>
<text x="814.2" y="624.6" textLength="81.4">Storm Motion:</text>
<text x="1043.5" y="624.6" fill="#ff0000" text-anchor="end" letter-spacing="-0.25">27.87</text>
<text x="1054.5" y="624.6" >[knt]</text>
<text x="814.2" y="644.6" textLength="115.3">SR Wind Sfc - 2km:</text>
<text x="1043.5" y="644.6" fill="#ffff00" text-anchor="end" letter-spacing="-0.25">14.81</text>
<text x="1054.5" y="644.6" >[knt]</text>
<text x="1154" y="644.6" >Supercells possible</text>
<text x="814.2" y="661.6" textLength="121.5">SR Wind 4km - 6km:</text>
<text x="1043.5" y="661.6" fill="#ff0000" text-anchor="end" letter-spacing="-0.25">26.23</text>
<text x="1054.5" y="661.6" >[knt]</text>
<text x="1154" y="661.6" >Tornadic Supercells possible</text>
<text x="814.2" y="678.6" textLength="128.4">SR Wind 9km - 11km:</text>
<text x="1043.5" y="678.6" fill="#ff0000" text-anchor="end" letter-spacing="-0.25">43.53</text>
<text x="1054.5" y="678.6" >[knt]</text>
<text x="1154" y="678.6" >Classic Supercell Type expected</text>
<text x="814.2" y="698.6" textLength="121.5">Effective Shear 6000:</text>
<text x="1043.5" y="698.6" fill="#ff0000" text-anchor="end" letter-spacing="-0.25">56.09</text>
<text x="1054.5" y="698.6" >[knt]</text>
<text x="814.2" y="718.6" textLength="147.5">Bulk Richardson Number:</text>
<text x="1043.5" y="718.6" fill="#ffff00" text-anchor="end" letter-spacing="-0.25">8.41</text>
<text x="1054.5" y="718.6" >[1]</text>
<text x="1154" y="718.6" >Multicells expected</text>
<text x="814.2" y="738.6" textLength="111.1">3km Effective SRH:</text>
<text x="1043.5" y="738.6" fill="#ff0000" text-anchor="end" letter-spacing="-0.25">135.26</text>
<text x="1054.5" y="738.6" >[m^2/s^2]</text>
<text x="1154" y="738.6" >Supercells possible</text>
<text x="814.2" y="755.6" textLength="159.1">Max. 3km SRH (SFC-2km):</text>
<text x="1043.5" y="755.6" fill="#ff0000" text-anchor="end" letter-spacing="-0.25">254.38</text>
<text x="1054.5" y="755.6" >[m^2/s^2]</text>
<text x="1154" y="755.6" >Supercells possible</text>
<text x="814.2" y="772.6" textLength="155.4">Max. 3km SRH Level AGL:</text>
<text x="1043.5" y="772.6" fill="#00ff00" text-anchor="end" letter-spacing="-0.25">2000.00</text>
<text x="1054.5" y="772.6" >[m]</text>
<text x="1154" y="772.6" >Tornadoes not likely</text>
<text x="814.2" y="792.6" textLength="155.4">3km Energy Helicity Index:</text>
<text x="1043.5" y="792.6" fill="#ff0000" text-anchor="end" letter-spacing="-0.25">0.97</text>
<text x="1054.5" y="792.6" >[1]</text>
<text x="1154" y="792.6" >Supercells possible</text>
<text x="814.2" y="809.6" textLength="140.0">3km Vorticity Gen. Pot.:</text>
<text x="1043.5" y="809.6" fill="#ff0000" text-anchor="end" letter-spacing="-0.25">0.23</text>
<text x="1054.5" y="809.6" >[m/s^2]</text>
<text x="1154" y="809.6" textLength="112.1">Tornadoes possible</text>
<g shape-rendering="crispEdges">
<rect x="724" y="827.0" width="15" height="8" fill="#ff0000" stroke="none"/>
<rect x="724" y="847.0" width="15" height="8" fill="#00ffff" stroke="none"/>
<rect x="724" y="867.0" width="15" height="8" fill="#00ff00" stroke="none"/>
<rect x="724" y="887.0" width="15" height="8" fill="#c8c800" stroke="none"/>
<rect x="999" y="827.0" width="15" height="8" fill="#00ff00" stroke="none"/>
<rect x="999" y="847.0" width="15" height="8" fill="#ffff00" stroke="none"/>
<rect x="999" y="867.0" width="15" height="8" fill="#ff0000" stroke="none"/>
</g>
<text x="748.0" y="835.5" fill="#ff0000" textLength="112.1">Temperature Profile</text>
<text x="748.0" y="855.5" fill="#00ffff" textLength="92.6">Dewpoint Profile</text>
<text x="748.0" y="875.5" fill="#00ff00" textLength="105.1">Windspeed Profile</text>
<text x="748.0" y="895.5" fill="#c8c800" textLength="223.2">Sfc-3km Storm Relative Helicity Profile</text>
<text x="1023.0" y="835.5" fill="#00ff00" textLength="184.4">No / Non Severe Thunderstorms</text>
<text x="1023.0" y="855.5" fill="#ffff00" textLength="212.3">Scattered / Moderate Thunderstorms</text>
<text x="1023.0" y="875.5" fill="#ff0000" textLength="210.7">Widespread / Severe Thunderstorms</text>
</svg>
</body></html>
